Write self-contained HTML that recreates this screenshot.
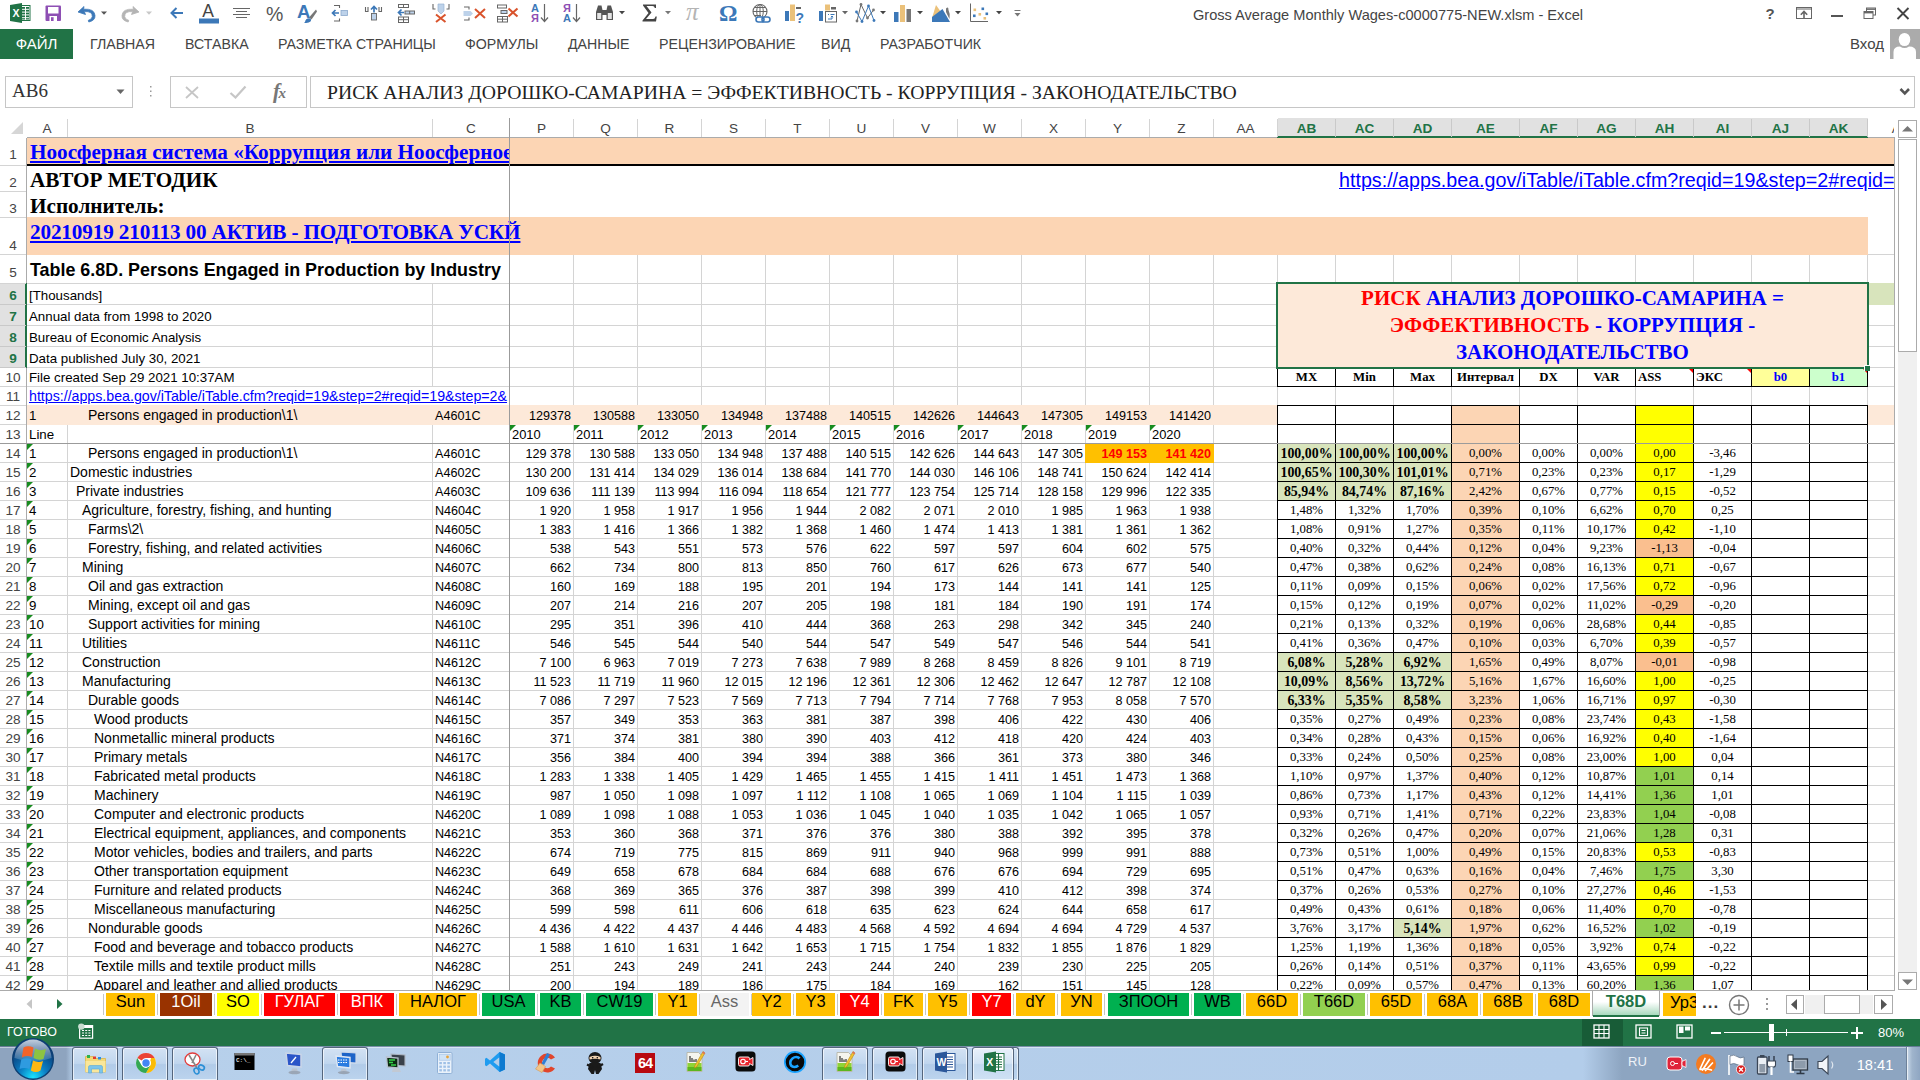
<!DOCTYPE html><html><head><meta charset="utf-8"><title>Excel</title><style>
html,body{margin:0;padding:0}
body{width:1920px;height:1080px;overflow:hidden;position:relative;background:#fff;font-family:'Liberation Sans',sans-serif;color:#000}
div,span.a,svg.a{position:absolute;box-sizing:border-box}
.t{white-space:pre;overflow:visible}
.c{font-size:13.3px;line-height:19px;white-space:pre}
.b{font-size:14px;line-height:19px;white-space:pre}
.k{font-size:12.6px;line-height:20px;white-space:pre}
.n{font-size:12.6px;line-height:21px;white-space:pre;text-align:right}
.s{font-family:'Liberation Serif',serif;font-size:12.8px;line-height:19px;text-align:center;white-space:pre}
.sb{font-family:'Liberation Serif',serif;font-size:13.9px;line-height:19px;text-align:center;font-weight:bold;white-space:pre}
.rh{font-size:13.6px;color:#444;text-align:center;width:26px;left:0}
.ch{font-size:13.6px;color:#444;text-align:center;top:118px;height:19px;line-height:21px}
.tab{top:993px;height:23px;font-size:16.5px;line-height:17px;text-align:center;white-space:pre;overflow:hidden}
.gt{width:0;height:0;border-top:6px solid #178c1f;border-right:6px solid transparent}
.rt{width:0;height:0;border-top:5px solid #f00;border-left:5px solid transparent}
.rb{top:29px;height:29px;line-height:30px;font-size:14.2px;color:#444;white-space:pre}
a{color:#00f}
</style></head><body>
<div id="g" style="left:0;top:0;width:1895px;height:991px;overflow:hidden">
<div style="left:27px;top:165px;width:1867px;height:1px;background:#d4d4d4"></div>
<div style="left:27px;top:191px;width:1867px;height:1px;background:#d4d4d4"></div>
<div style="left:27px;top:217px;width:1867px;height:1px;background:#d4d4d4"></div>
<div style="left:27px;top:254px;width:1867px;height:1px;background:#d4d4d4"></div>
<div style="left:27px;top:283px;width:1867px;height:1px;background:#d4d4d4"></div>
<div style="left:27px;top:304px;width:1867px;height:1px;background:#d4d4d4"></div>
<div style="left:27px;top:325px;width:1867px;height:1px;background:#d4d4d4"></div>
<div style="left:27px;top:346px;width:1867px;height:1px;background:#d4d4d4"></div>
<div style="left:27px;top:367px;width:1867px;height:1px;background:#d4d4d4"></div>
<div style="left:27px;top:386px;width:1867px;height:1px;background:#d4d4d4"></div>
<div style="left:27px;top:405px;width:1867px;height:1px;background:#d4d4d4"></div>
<div style="left:27px;top:424px;width:1867px;height:1px;background:#d4d4d4"></div>
<div style="left:27px;top:443px;width:1867px;height:1px;background:#d4d4d4"></div>
<div style="left:27px;top:462px;width:1867px;height:1px;background:#d4d4d4"></div>
<div style="left:27px;top:481px;width:1867px;height:1px;background:#d4d4d4"></div>
<div style="left:27px;top:500px;width:1867px;height:1px;background:#d4d4d4"></div>
<div style="left:27px;top:519px;width:1867px;height:1px;background:#d4d4d4"></div>
<div style="left:27px;top:538px;width:1867px;height:1px;background:#d4d4d4"></div>
<div style="left:27px;top:557px;width:1867px;height:1px;background:#d4d4d4"></div>
<div style="left:27px;top:576px;width:1867px;height:1px;background:#d4d4d4"></div>
<div style="left:27px;top:595px;width:1867px;height:1px;background:#d4d4d4"></div>
<div style="left:27px;top:614px;width:1867px;height:1px;background:#d4d4d4"></div>
<div style="left:27px;top:633px;width:1867px;height:1px;background:#d4d4d4"></div>
<div style="left:27px;top:652px;width:1867px;height:1px;background:#d4d4d4"></div>
<div style="left:27px;top:671px;width:1867px;height:1px;background:#d4d4d4"></div>
<div style="left:27px;top:690px;width:1867px;height:1px;background:#d4d4d4"></div>
<div style="left:27px;top:709px;width:1867px;height:1px;background:#d4d4d4"></div>
<div style="left:27px;top:728px;width:1867px;height:1px;background:#d4d4d4"></div>
<div style="left:27px;top:747px;width:1867px;height:1px;background:#d4d4d4"></div>
<div style="left:27px;top:766px;width:1867px;height:1px;background:#d4d4d4"></div>
<div style="left:27px;top:785px;width:1867px;height:1px;background:#d4d4d4"></div>
<div style="left:27px;top:804px;width:1867px;height:1px;background:#d4d4d4"></div>
<div style="left:27px;top:823px;width:1867px;height:1px;background:#d4d4d4"></div>
<div style="left:27px;top:842px;width:1867px;height:1px;background:#d4d4d4"></div>
<div style="left:27px;top:861px;width:1867px;height:1px;background:#d4d4d4"></div>
<div style="left:27px;top:880px;width:1867px;height:1px;background:#d4d4d4"></div>
<div style="left:27px;top:899px;width:1867px;height:1px;background:#d4d4d4"></div>
<div style="left:27px;top:918px;width:1867px;height:1px;background:#d4d4d4"></div>
<div style="left:27px;top:937px;width:1867px;height:1px;background:#d4d4d4"></div>
<div style="left:27px;top:956px;width:1867px;height:1px;background:#d4d4d4"></div>
<div style="left:27px;top:975px;width:1867px;height:1px;background:#d4d4d4"></div>
<div style="left:67px;top:138px;width:1px;height:852px;background:#d4d4d4"></div>
<div style="left:432px;top:138px;width:1px;height:852px;background:#d4d4d4"></div>
<div style="left:509px;top:138px;width:1px;height:852px;background:#d4d4d4"></div>
<div style="left:573px;top:138px;width:1px;height:852px;background:#d4d4d4"></div>
<div style="left:637px;top:138px;width:1px;height:852px;background:#d4d4d4"></div>
<div style="left:701px;top:138px;width:1px;height:852px;background:#d4d4d4"></div>
<div style="left:765px;top:138px;width:1px;height:852px;background:#d4d4d4"></div>
<div style="left:829px;top:138px;width:1px;height:852px;background:#d4d4d4"></div>
<div style="left:893px;top:138px;width:1px;height:852px;background:#d4d4d4"></div>
<div style="left:957px;top:138px;width:1px;height:852px;background:#d4d4d4"></div>
<div style="left:1021px;top:138px;width:1px;height:852px;background:#d4d4d4"></div>
<div style="left:1085px;top:138px;width:1px;height:852px;background:#d4d4d4"></div>
<div style="left:1149px;top:138px;width:1px;height:852px;background:#d4d4d4"></div>
<div style="left:1213px;top:138px;width:1px;height:852px;background:#d4d4d4"></div>
<div style="left:1277px;top:138px;width:1px;height:852px;background:#d4d4d4"></div>
<div style="left:1335px;top:138px;width:1px;height:852px;background:#d4d4d4"></div>
<div style="left:1393px;top:138px;width:1px;height:852px;background:#d4d4d4"></div>
<div style="left:1451px;top:138px;width:1px;height:852px;background:#d4d4d4"></div>
<div style="left:1519px;top:138px;width:1px;height:852px;background:#d4d4d4"></div>
<div style="left:1577px;top:138px;width:1px;height:852px;background:#d4d4d4"></div>
<div style="left:1635px;top:138px;width:1px;height:852px;background:#d4d4d4"></div>
<div style="left:1693px;top:138px;width:1px;height:852px;background:#d4d4d4"></div>
<div style="left:1751px;top:138px;width:1px;height:852px;background:#d4d4d4"></div>
<div style="left:1809px;top:138px;width:1px;height:852px;background:#d4d4d4"></div>
<div style="left:1867px;top:138px;width:1px;height:852px;background:#d4d4d4"></div>
<div style="left:27px;top:138px;width:1867px;height:28px;background:#fcd5b4;"></div>
<div style="left:27px;top:165px;width:1867px;height:53px;background:#fff;"></div>
<div style="left:27px;top:164px;width:1867px;height:2px;background:#000"></div>
<div style="left:27px;top:217px;width:1841px;height:38px;background:#fcd5b4;"></div>
<div style="left:27px;top:255px;width:482px;height:28px;background:#fff"></div>
<div style="left:67px;top:284px;width:1px;height:20px;background:#fff"></div>
<div style="left:67px;top:305px;width:1px;height:20px;background:#fff"></div>
<div style="left:67px;top:326px;width:1px;height:20px;background:#fff"></div>
<div style="left:67px;top:347px;width:1px;height:20px;background:#fff"></div>
<div style="left:67px;top:368px;width:1px;height:18px;background:#fff"></div>
<div style="left:67px;top:387px;width:1px;height:18px;background:#fff"></div>
<div style="left:432px;top:387px;width:1px;height:18px;background:#fff"></div>
<div style="left:27px;top:405px;width:1867px;height:20px;background:#fde9d9;"></div>
<div style="left:1868px;top:283px;width:26px;height:22px;background:#d8e4bc"></div>
<div style="left:27px;top:138px;width:482px;height:26px;overflow:hidden"><a class="a" style="left:3px;top:0;font-family:'Liberation Serif',serif;font-weight:bold;white-space:pre;font-size:21.2px;line-height:29px;color:#00f;text-decoration:underline;position:absolute">Ноосферная система «Коррупция или Ноосферное</a></div>
<div class="t" style="left:30px;top:166px;width:400px;height:26px;font-family:'Liberation Serif',serif;font-weight:bold;white-space:pre;font-size:21.2px;line-height:29px">АВТОР МЕТОДИК</div>
<div class="t" style="left:30px;top:192px;width:400px;height:26px;font-family:'Liberation Serif',serif;font-weight:bold;white-space:pre;font-size:21.2px;line-height:29px">Исполнитель:</div>
<div style="left:27px;top:218px;width:494px;height:37px;overflow:hidden"><a style="left:3px;top:0;font-family:'Liberation Serif',serif;font-weight:bold;white-space:pre;font-size:21.2px;letter-spacing:-.14px;line-height:29px;color:#00f;text-decoration:underline;position:absolute">20210919 210113 00 АКТИВ - ПОДГОТОВКА УСКЙ</a></div>
<div class="t" style="left:30px;top:255px;width:480px;height:28px;font-weight:bold;font-size:17.9px;line-height:31px">Table 6.8D. Persons Engaged in Production by Industry</div>
<div style="left:1300px;top:166px;width:594px;height:26px;overflow:hidden"><a style="left:39px;top:0;position:absolute;white-space:pre;font-size:19.7px;line-height:28px;color:#00f;text-decoration:underline">https://apps.bea.gov/iTable/iTable.cfm?reqid=19&amp;step=2#reqid=</a></div>
<div class="c" style="left:29px;top:284px;width:400px;height:21px;line-height:24px">[Thousands]</div>
<div class="c" style="left:29px;top:305px;width:400px;height:21px;line-height:24px">Annual data from 1998 to 2020</div>
<div class="c" style="left:29px;top:326px;width:400px;height:21px;line-height:24px">Bureau of Economic Analysis</div>
<div class="c" style="left:29px;top:347px;width:400px;height:21px;line-height:24px">Data published July 30, 2021</div>
<div class="c" style="left:29px;top:368px;width:400px;height:19px;line-height:20px">File created Sep 29 2021 10:37AM</div>
<div style="left:27px;top:387px;width:482px;height:19px;overflow:hidden"><a class="c" style="left:2px;top:0;position:absolute;color:#00f;text-decoration:underline;font-size:14.2px">https://apps.bea.gov/iTable/iTable.cfm?reqid=19&amp;step=2#reqid=19&amp;step=2&amp;</a></div>
<div class="c" style="left:29px;top:406px;width:36px;height:19px;">1</div>
<div class="b" style="left:88px;top:406px;width:300px;height:19px;">Persons engaged in production\1\</div>
<div class="k" style="left:435px;top:406px;width:72px;height:19px;">A4601C</div>
<div class="n" style="left:512px;top:406px;width:59px;height:19px;">129378</div>
<div class="n" style="left:576px;top:406px;width:59px;height:19px;">130588</div>
<div class="n" style="left:640px;top:406px;width:59px;height:19px;">133050</div>
<div class="n" style="left:704px;top:406px;width:59px;height:19px;">134948</div>
<div class="n" style="left:768px;top:406px;width:59px;height:19px;">137488</div>
<div class="n" style="left:832px;top:406px;width:59px;height:19px;">140515</div>
<div class="n" style="left:896px;top:406px;width:59px;height:19px;">142626</div>
<div class="n" style="left:960px;top:406px;width:59px;height:19px;">144643</div>
<div class="n" style="left:1024px;top:406px;width:59px;height:19px;">147305</div>
<div class="n" style="left:1088px;top:406px;width:59px;height:19px;">149153</div>
<div class="n" style="left:1152px;top:406px;width:59px;height:19px;">141420</div>
<div class="c" style="left:29px;top:425px;width:36px;height:19px;">Line</div>
<div class="c" style="left:512px;top:425px;width:59px;height:19px;font-size:12.9px">2010</div>
<div class="gt" style="left:510px;top:425px;width:0px;height:0px;"></div>
<div class="c" style="left:576px;top:425px;width:59px;height:19px;font-size:12.9px">2011</div>
<div class="gt" style="left:574px;top:425px;width:0px;height:0px;"></div>
<div class="c" style="left:640px;top:425px;width:59px;height:19px;font-size:12.9px">2012</div>
<div class="gt" style="left:638px;top:425px;width:0px;height:0px;"></div>
<div class="c" style="left:704px;top:425px;width:59px;height:19px;font-size:12.9px">2013</div>
<div class="gt" style="left:702px;top:425px;width:0px;height:0px;"></div>
<div class="c" style="left:768px;top:425px;width:59px;height:19px;font-size:12.9px">2014</div>
<div class="gt" style="left:766px;top:425px;width:0px;height:0px;"></div>
<div class="c" style="left:832px;top:425px;width:59px;height:19px;font-size:12.9px">2015</div>
<div class="gt" style="left:830px;top:425px;width:0px;height:0px;"></div>
<div class="c" style="left:896px;top:425px;width:59px;height:19px;font-size:12.9px">2016</div>
<div class="gt" style="left:894px;top:425px;width:0px;height:0px;"></div>
<div class="c" style="left:960px;top:425px;width:59px;height:19px;font-size:12.9px">2017</div>
<div class="gt" style="left:958px;top:425px;width:0px;height:0px;"></div>
<div class="c" style="left:1024px;top:425px;width:59px;height:19px;font-size:12.9px">2018</div>
<div class="gt" style="left:1022px;top:425px;width:0px;height:0px;"></div>
<div class="c" style="left:1088px;top:425px;width:59px;height:19px;font-size:12.9px">2019</div>
<div class="gt" style="left:1086px;top:425px;width:0px;height:0px;"></div>
<div class="c" style="left:1152px;top:425px;width:59px;height:19px;font-size:12.9px">2020</div>
<div class="gt" style="left:1150px;top:425px;width:0px;height:0px;"></div>
<div style="left:1085px;top:443px;width:129px;height:20px;background:#ffc000;"></div>
<div class="c" style="left:29px;top:444px;width:36px;height:19px;">1</div>
<div class="gt" style="left:27px;top:444px;width:0px;height:0px;"></div>
<div class="b" style="left:88px;top:444px;width:360px;height:19px;">Persons engaged in production\1\</div>
<div class="k" style="left:435px;top:444px;width:72px;height:19px;">A4601C</div>
<div class="n" style="left:512px;top:444px;width:59px;height:19px;">129 378</div>
<div class="n" style="left:576px;top:444px;width:59px;height:19px;">130 588</div>
<div class="n" style="left:640px;top:444px;width:59px;height:19px;">133 050</div>
<div class="n" style="left:704px;top:444px;width:59px;height:19px;">134 948</div>
<div class="n" style="left:768px;top:444px;width:59px;height:19px;">137 488</div>
<div class="n" style="left:832px;top:444px;width:59px;height:19px;">140 515</div>
<div class="n" style="left:896px;top:444px;width:59px;height:19px;">142 626</div>
<div class="n" style="left:960px;top:444px;width:59px;height:19px;">144 643</div>
<div class="n" style="left:1024px;top:444px;width:59px;height:19px;">147 305</div>
<div class="n" style="left:1088px;top:444px;width:59px;height:19px;color:#f00;font-weight:bold">149 153</div>
<div class="n" style="left:1152px;top:444px;width:59px;height:19px;color:#f00;font-weight:bold">141 420</div>
<div class="c" style="left:29px;top:463px;width:36px;height:19px;">2</div>
<div class="gt" style="left:27px;top:463px;width:0px;height:0px;"></div>
<div class="b" style="left:70px;top:463px;width:360px;height:19px;">Domestic industries</div>
<div class="k" style="left:435px;top:463px;width:72px;height:19px;">A4602C</div>
<div class="n" style="left:512px;top:463px;width:59px;height:19px;">130 200</div>
<div class="n" style="left:576px;top:463px;width:59px;height:19px;">131 414</div>
<div class="n" style="left:640px;top:463px;width:59px;height:19px;">134 029</div>
<div class="n" style="left:704px;top:463px;width:59px;height:19px;">136 014</div>
<div class="n" style="left:768px;top:463px;width:59px;height:19px;">138 684</div>
<div class="n" style="left:832px;top:463px;width:59px;height:19px;">141 770</div>
<div class="n" style="left:896px;top:463px;width:59px;height:19px;">144 030</div>
<div class="n" style="left:960px;top:463px;width:59px;height:19px;">146 106</div>
<div class="n" style="left:1024px;top:463px;width:59px;height:19px;">148 741</div>
<div class="n" style="left:1088px;top:463px;width:59px;height:19px;">150 624</div>
<div class="n" style="left:1152px;top:463px;width:59px;height:19px;">142 414</div>
<div class="c" style="left:29px;top:482px;width:36px;height:19px;">3</div>
<div class="gt" style="left:27px;top:482px;width:0px;height:0px;"></div>
<div class="b" style="left:76px;top:482px;width:360px;height:19px;">Private industries</div>
<div class="k" style="left:435px;top:482px;width:72px;height:19px;">A4603C</div>
<div class="n" style="left:512px;top:482px;width:59px;height:19px;">109 636</div>
<div class="n" style="left:576px;top:482px;width:59px;height:19px;">111 139</div>
<div class="n" style="left:640px;top:482px;width:59px;height:19px;">113 994</div>
<div class="n" style="left:704px;top:482px;width:59px;height:19px;">116 094</div>
<div class="n" style="left:768px;top:482px;width:59px;height:19px;">118 654</div>
<div class="n" style="left:832px;top:482px;width:59px;height:19px;">121 777</div>
<div class="n" style="left:896px;top:482px;width:59px;height:19px;">123 754</div>
<div class="n" style="left:960px;top:482px;width:59px;height:19px;">125 714</div>
<div class="n" style="left:1024px;top:482px;width:59px;height:19px;">128 158</div>
<div class="n" style="left:1088px;top:482px;width:59px;height:19px;">129 996</div>
<div class="n" style="left:1152px;top:482px;width:59px;height:19px;">122 335</div>
<div class="c" style="left:29px;top:501px;width:36px;height:19px;">4</div>
<div class="gt" style="left:27px;top:501px;width:0px;height:0px;"></div>
<div class="b" style="left:82px;top:501px;width:360px;height:19px;">Agriculture, forestry, fishing, and hunting</div>
<div class="k" style="left:435px;top:501px;width:72px;height:19px;">N4604C</div>
<div class="n" style="left:512px;top:501px;width:59px;height:19px;">1 920</div>
<div class="n" style="left:576px;top:501px;width:59px;height:19px;">1 958</div>
<div class="n" style="left:640px;top:501px;width:59px;height:19px;">1 917</div>
<div class="n" style="left:704px;top:501px;width:59px;height:19px;">1 956</div>
<div class="n" style="left:768px;top:501px;width:59px;height:19px;">1 944</div>
<div class="n" style="left:832px;top:501px;width:59px;height:19px;">2 082</div>
<div class="n" style="left:896px;top:501px;width:59px;height:19px;">2 071</div>
<div class="n" style="left:960px;top:501px;width:59px;height:19px;">2 010</div>
<div class="n" style="left:1024px;top:501px;width:59px;height:19px;">1 985</div>
<div class="n" style="left:1088px;top:501px;width:59px;height:19px;">1 963</div>
<div class="n" style="left:1152px;top:501px;width:59px;height:19px;">1 938</div>
<div class="c" style="left:29px;top:520px;width:36px;height:19px;">5</div>
<div class="gt" style="left:27px;top:520px;width:0px;height:0px;"></div>
<div class="b" style="left:88px;top:520px;width:360px;height:19px;">Farms\2\</div>
<div class="k" style="left:435px;top:520px;width:72px;height:19px;">N4605C</div>
<div class="n" style="left:512px;top:520px;width:59px;height:19px;">1 383</div>
<div class="n" style="left:576px;top:520px;width:59px;height:19px;">1 416</div>
<div class="n" style="left:640px;top:520px;width:59px;height:19px;">1 366</div>
<div class="n" style="left:704px;top:520px;width:59px;height:19px;">1 382</div>
<div class="n" style="left:768px;top:520px;width:59px;height:19px;">1 368</div>
<div class="n" style="left:832px;top:520px;width:59px;height:19px;">1 460</div>
<div class="n" style="left:896px;top:520px;width:59px;height:19px;">1 474</div>
<div class="n" style="left:960px;top:520px;width:59px;height:19px;">1 413</div>
<div class="n" style="left:1024px;top:520px;width:59px;height:19px;">1 381</div>
<div class="n" style="left:1088px;top:520px;width:59px;height:19px;">1 361</div>
<div class="n" style="left:1152px;top:520px;width:59px;height:19px;">1 362</div>
<div class="c" style="left:29px;top:539px;width:36px;height:19px;">6</div>
<div class="gt" style="left:27px;top:539px;width:0px;height:0px;"></div>
<div class="b" style="left:88px;top:539px;width:360px;height:19px;">Forestry, fishing, and related activities</div>
<div class="k" style="left:435px;top:539px;width:72px;height:19px;">N4606C</div>
<div class="n" style="left:512px;top:539px;width:59px;height:19px;">538</div>
<div class="n" style="left:576px;top:539px;width:59px;height:19px;">543</div>
<div class="n" style="left:640px;top:539px;width:59px;height:19px;">551</div>
<div class="n" style="left:704px;top:539px;width:59px;height:19px;">573</div>
<div class="n" style="left:768px;top:539px;width:59px;height:19px;">576</div>
<div class="n" style="left:832px;top:539px;width:59px;height:19px;">622</div>
<div class="n" style="left:896px;top:539px;width:59px;height:19px;">597</div>
<div class="n" style="left:960px;top:539px;width:59px;height:19px;">597</div>
<div class="n" style="left:1024px;top:539px;width:59px;height:19px;">604</div>
<div class="n" style="left:1088px;top:539px;width:59px;height:19px;">602</div>
<div class="n" style="left:1152px;top:539px;width:59px;height:19px;">575</div>
<div class="c" style="left:29px;top:558px;width:36px;height:19px;">7</div>
<div class="gt" style="left:27px;top:558px;width:0px;height:0px;"></div>
<div class="b" style="left:82px;top:558px;width:360px;height:19px;">Mining</div>
<div class="k" style="left:435px;top:558px;width:72px;height:19px;">N4607C</div>
<div class="n" style="left:512px;top:558px;width:59px;height:19px;">662</div>
<div class="n" style="left:576px;top:558px;width:59px;height:19px;">734</div>
<div class="n" style="left:640px;top:558px;width:59px;height:19px;">800</div>
<div class="n" style="left:704px;top:558px;width:59px;height:19px;">813</div>
<div class="n" style="left:768px;top:558px;width:59px;height:19px;">850</div>
<div class="n" style="left:832px;top:558px;width:59px;height:19px;">760</div>
<div class="n" style="left:896px;top:558px;width:59px;height:19px;">617</div>
<div class="n" style="left:960px;top:558px;width:59px;height:19px;">626</div>
<div class="n" style="left:1024px;top:558px;width:59px;height:19px;">673</div>
<div class="n" style="left:1088px;top:558px;width:59px;height:19px;">677</div>
<div class="n" style="left:1152px;top:558px;width:59px;height:19px;">540</div>
<div class="c" style="left:29px;top:577px;width:36px;height:19px;">8</div>
<div class="gt" style="left:27px;top:577px;width:0px;height:0px;"></div>
<div class="b" style="left:88px;top:577px;width:360px;height:19px;">Oil and gas extraction</div>
<div class="k" style="left:435px;top:577px;width:72px;height:19px;">N4608C</div>
<div class="n" style="left:512px;top:577px;width:59px;height:19px;">160</div>
<div class="n" style="left:576px;top:577px;width:59px;height:19px;">169</div>
<div class="n" style="left:640px;top:577px;width:59px;height:19px;">188</div>
<div class="n" style="left:704px;top:577px;width:59px;height:19px;">195</div>
<div class="n" style="left:768px;top:577px;width:59px;height:19px;">201</div>
<div class="n" style="left:832px;top:577px;width:59px;height:19px;">194</div>
<div class="n" style="left:896px;top:577px;width:59px;height:19px;">173</div>
<div class="n" style="left:960px;top:577px;width:59px;height:19px;">144</div>
<div class="n" style="left:1024px;top:577px;width:59px;height:19px;">141</div>
<div class="n" style="left:1088px;top:577px;width:59px;height:19px;">141</div>
<div class="n" style="left:1152px;top:577px;width:59px;height:19px;">125</div>
<div class="c" style="left:29px;top:596px;width:36px;height:19px;">9</div>
<div class="gt" style="left:27px;top:596px;width:0px;height:0px;"></div>
<div class="b" style="left:88px;top:596px;width:360px;height:19px;">Mining, except oil and gas</div>
<div class="k" style="left:435px;top:596px;width:72px;height:19px;">N4609C</div>
<div class="n" style="left:512px;top:596px;width:59px;height:19px;">207</div>
<div class="n" style="left:576px;top:596px;width:59px;height:19px;">214</div>
<div class="n" style="left:640px;top:596px;width:59px;height:19px;">216</div>
<div class="n" style="left:704px;top:596px;width:59px;height:19px;">207</div>
<div class="n" style="left:768px;top:596px;width:59px;height:19px;">205</div>
<div class="n" style="left:832px;top:596px;width:59px;height:19px;">198</div>
<div class="n" style="left:896px;top:596px;width:59px;height:19px;">181</div>
<div class="n" style="left:960px;top:596px;width:59px;height:19px;">184</div>
<div class="n" style="left:1024px;top:596px;width:59px;height:19px;">190</div>
<div class="n" style="left:1088px;top:596px;width:59px;height:19px;">191</div>
<div class="n" style="left:1152px;top:596px;width:59px;height:19px;">174</div>
<div class="c" style="left:29px;top:615px;width:36px;height:19px;">10</div>
<div class="gt" style="left:27px;top:615px;width:0px;height:0px;"></div>
<div class="b" style="left:88px;top:615px;width:360px;height:19px;">Support activities for mining</div>
<div class="k" style="left:435px;top:615px;width:72px;height:19px;">N4610C</div>
<div class="n" style="left:512px;top:615px;width:59px;height:19px;">295</div>
<div class="n" style="left:576px;top:615px;width:59px;height:19px;">351</div>
<div class="n" style="left:640px;top:615px;width:59px;height:19px;">396</div>
<div class="n" style="left:704px;top:615px;width:59px;height:19px;">410</div>
<div class="n" style="left:768px;top:615px;width:59px;height:19px;">444</div>
<div class="n" style="left:832px;top:615px;width:59px;height:19px;">368</div>
<div class="n" style="left:896px;top:615px;width:59px;height:19px;">263</div>
<div class="n" style="left:960px;top:615px;width:59px;height:19px;">298</div>
<div class="n" style="left:1024px;top:615px;width:59px;height:19px;">342</div>
<div class="n" style="left:1088px;top:615px;width:59px;height:19px;">345</div>
<div class="n" style="left:1152px;top:615px;width:59px;height:19px;">240</div>
<div class="c" style="left:29px;top:634px;width:36px;height:19px;">11</div>
<div class="gt" style="left:27px;top:634px;width:0px;height:0px;"></div>
<div class="b" style="left:82px;top:634px;width:360px;height:19px;">Utilities</div>
<div class="k" style="left:435px;top:634px;width:72px;height:19px;">N4611C</div>
<div class="n" style="left:512px;top:634px;width:59px;height:19px;">546</div>
<div class="n" style="left:576px;top:634px;width:59px;height:19px;">545</div>
<div class="n" style="left:640px;top:634px;width:59px;height:19px;">544</div>
<div class="n" style="left:704px;top:634px;width:59px;height:19px;">540</div>
<div class="n" style="left:768px;top:634px;width:59px;height:19px;">544</div>
<div class="n" style="left:832px;top:634px;width:59px;height:19px;">547</div>
<div class="n" style="left:896px;top:634px;width:59px;height:19px;">549</div>
<div class="n" style="left:960px;top:634px;width:59px;height:19px;">547</div>
<div class="n" style="left:1024px;top:634px;width:59px;height:19px;">546</div>
<div class="n" style="left:1088px;top:634px;width:59px;height:19px;">544</div>
<div class="n" style="left:1152px;top:634px;width:59px;height:19px;">541</div>
<div class="c" style="left:29px;top:653px;width:36px;height:19px;">12</div>
<div class="gt" style="left:27px;top:653px;width:0px;height:0px;"></div>
<div class="b" style="left:82px;top:653px;width:360px;height:19px;">Construction</div>
<div class="k" style="left:435px;top:653px;width:72px;height:19px;">N4612C</div>
<div class="n" style="left:512px;top:653px;width:59px;height:19px;">7 100</div>
<div class="n" style="left:576px;top:653px;width:59px;height:19px;">6 963</div>
<div class="n" style="left:640px;top:653px;width:59px;height:19px;">7 019</div>
<div class="n" style="left:704px;top:653px;width:59px;height:19px;">7 273</div>
<div class="n" style="left:768px;top:653px;width:59px;height:19px;">7 638</div>
<div class="n" style="left:832px;top:653px;width:59px;height:19px;">7 989</div>
<div class="n" style="left:896px;top:653px;width:59px;height:19px;">8 268</div>
<div class="n" style="left:960px;top:653px;width:59px;height:19px;">8 459</div>
<div class="n" style="left:1024px;top:653px;width:59px;height:19px;">8 826</div>
<div class="n" style="left:1088px;top:653px;width:59px;height:19px;">9 101</div>
<div class="n" style="left:1152px;top:653px;width:59px;height:19px;">8 719</div>
<div class="c" style="left:29px;top:672px;width:36px;height:19px;">13</div>
<div class="gt" style="left:27px;top:672px;width:0px;height:0px;"></div>
<div class="b" style="left:82px;top:672px;width:360px;height:19px;">Manufacturing</div>
<div class="k" style="left:435px;top:672px;width:72px;height:19px;">N4613C</div>
<div class="n" style="left:512px;top:672px;width:59px;height:19px;">11 523</div>
<div class="n" style="left:576px;top:672px;width:59px;height:19px;">11 719</div>
<div class="n" style="left:640px;top:672px;width:59px;height:19px;">11 960</div>
<div class="n" style="left:704px;top:672px;width:59px;height:19px;">12 015</div>
<div class="n" style="left:768px;top:672px;width:59px;height:19px;">12 196</div>
<div class="n" style="left:832px;top:672px;width:59px;height:19px;">12 361</div>
<div class="n" style="left:896px;top:672px;width:59px;height:19px;">12 306</div>
<div class="n" style="left:960px;top:672px;width:59px;height:19px;">12 462</div>
<div class="n" style="left:1024px;top:672px;width:59px;height:19px;">12 647</div>
<div class="n" style="left:1088px;top:672px;width:59px;height:19px;">12 787</div>
<div class="n" style="left:1152px;top:672px;width:59px;height:19px;">12 108</div>
<div class="c" style="left:29px;top:691px;width:36px;height:19px;">14</div>
<div class="gt" style="left:27px;top:691px;width:0px;height:0px;"></div>
<div class="b" style="left:88px;top:691px;width:360px;height:19px;">Durable goods</div>
<div class="k" style="left:435px;top:691px;width:72px;height:19px;">N4614C</div>
<div class="n" style="left:512px;top:691px;width:59px;height:19px;">7 086</div>
<div class="n" style="left:576px;top:691px;width:59px;height:19px;">7 297</div>
<div class="n" style="left:640px;top:691px;width:59px;height:19px;">7 523</div>
<div class="n" style="left:704px;top:691px;width:59px;height:19px;">7 569</div>
<div class="n" style="left:768px;top:691px;width:59px;height:19px;">7 713</div>
<div class="n" style="left:832px;top:691px;width:59px;height:19px;">7 794</div>
<div class="n" style="left:896px;top:691px;width:59px;height:19px;">7 714</div>
<div class="n" style="left:960px;top:691px;width:59px;height:19px;">7 768</div>
<div class="n" style="left:1024px;top:691px;width:59px;height:19px;">7 953</div>
<div class="n" style="left:1088px;top:691px;width:59px;height:19px;">8 058</div>
<div class="n" style="left:1152px;top:691px;width:59px;height:19px;">7 570</div>
<div class="c" style="left:29px;top:710px;width:36px;height:19px;">15</div>
<div class="gt" style="left:27px;top:710px;width:0px;height:0px;"></div>
<div class="b" style="left:94px;top:710px;width:360px;height:19px;">Wood products</div>
<div class="k" style="left:435px;top:710px;width:72px;height:19px;">N4615C</div>
<div class="n" style="left:512px;top:710px;width:59px;height:19px;">357</div>
<div class="n" style="left:576px;top:710px;width:59px;height:19px;">349</div>
<div class="n" style="left:640px;top:710px;width:59px;height:19px;">353</div>
<div class="n" style="left:704px;top:710px;width:59px;height:19px;">363</div>
<div class="n" style="left:768px;top:710px;width:59px;height:19px;">381</div>
<div class="n" style="left:832px;top:710px;width:59px;height:19px;">387</div>
<div class="n" style="left:896px;top:710px;width:59px;height:19px;">398</div>
<div class="n" style="left:960px;top:710px;width:59px;height:19px;">406</div>
<div class="n" style="left:1024px;top:710px;width:59px;height:19px;">422</div>
<div class="n" style="left:1088px;top:710px;width:59px;height:19px;">430</div>
<div class="n" style="left:1152px;top:710px;width:59px;height:19px;">406</div>
<div class="c" style="left:29px;top:729px;width:36px;height:19px;">16</div>
<div class="gt" style="left:27px;top:729px;width:0px;height:0px;"></div>
<div class="b" style="left:94px;top:729px;width:360px;height:19px;">Nonmetallic mineral products</div>
<div class="k" style="left:435px;top:729px;width:72px;height:19px;">N4616C</div>
<div class="n" style="left:512px;top:729px;width:59px;height:19px;">371</div>
<div class="n" style="left:576px;top:729px;width:59px;height:19px;">374</div>
<div class="n" style="left:640px;top:729px;width:59px;height:19px;">381</div>
<div class="n" style="left:704px;top:729px;width:59px;height:19px;">380</div>
<div class="n" style="left:768px;top:729px;width:59px;height:19px;">390</div>
<div class="n" style="left:832px;top:729px;width:59px;height:19px;">403</div>
<div class="n" style="left:896px;top:729px;width:59px;height:19px;">412</div>
<div class="n" style="left:960px;top:729px;width:59px;height:19px;">418</div>
<div class="n" style="left:1024px;top:729px;width:59px;height:19px;">420</div>
<div class="n" style="left:1088px;top:729px;width:59px;height:19px;">424</div>
<div class="n" style="left:1152px;top:729px;width:59px;height:19px;">403</div>
<div class="c" style="left:29px;top:748px;width:36px;height:19px;">17</div>
<div class="gt" style="left:27px;top:748px;width:0px;height:0px;"></div>
<div class="b" style="left:94px;top:748px;width:360px;height:19px;">Primary metals</div>
<div class="k" style="left:435px;top:748px;width:72px;height:19px;">N4617C</div>
<div class="n" style="left:512px;top:748px;width:59px;height:19px;">356</div>
<div class="n" style="left:576px;top:748px;width:59px;height:19px;">384</div>
<div class="n" style="left:640px;top:748px;width:59px;height:19px;">400</div>
<div class="n" style="left:704px;top:748px;width:59px;height:19px;">394</div>
<div class="n" style="left:768px;top:748px;width:59px;height:19px;">394</div>
<div class="n" style="left:832px;top:748px;width:59px;height:19px;">388</div>
<div class="n" style="left:896px;top:748px;width:59px;height:19px;">366</div>
<div class="n" style="left:960px;top:748px;width:59px;height:19px;">361</div>
<div class="n" style="left:1024px;top:748px;width:59px;height:19px;">373</div>
<div class="n" style="left:1088px;top:748px;width:59px;height:19px;">380</div>
<div class="n" style="left:1152px;top:748px;width:59px;height:19px;">346</div>
<div class="c" style="left:29px;top:767px;width:36px;height:19px;">18</div>
<div class="gt" style="left:27px;top:767px;width:0px;height:0px;"></div>
<div class="b" style="left:94px;top:767px;width:360px;height:19px;">Fabricated metal products</div>
<div class="k" style="left:435px;top:767px;width:72px;height:19px;">N4618C</div>
<div class="n" style="left:512px;top:767px;width:59px;height:19px;">1 283</div>
<div class="n" style="left:576px;top:767px;width:59px;height:19px;">1 338</div>
<div class="n" style="left:640px;top:767px;width:59px;height:19px;">1 405</div>
<div class="n" style="left:704px;top:767px;width:59px;height:19px;">1 429</div>
<div class="n" style="left:768px;top:767px;width:59px;height:19px;">1 465</div>
<div class="n" style="left:832px;top:767px;width:59px;height:19px;">1 455</div>
<div class="n" style="left:896px;top:767px;width:59px;height:19px;">1 415</div>
<div class="n" style="left:960px;top:767px;width:59px;height:19px;">1 411</div>
<div class="n" style="left:1024px;top:767px;width:59px;height:19px;">1 451</div>
<div class="n" style="left:1088px;top:767px;width:59px;height:19px;">1 473</div>
<div class="n" style="left:1152px;top:767px;width:59px;height:19px;">1 368</div>
<div class="c" style="left:29px;top:786px;width:36px;height:19px;">19</div>
<div class="gt" style="left:27px;top:786px;width:0px;height:0px;"></div>
<div class="b" style="left:94px;top:786px;width:360px;height:19px;">Machinery</div>
<div class="k" style="left:435px;top:786px;width:72px;height:19px;">N4619C</div>
<div class="n" style="left:512px;top:786px;width:59px;height:19px;">987</div>
<div class="n" style="left:576px;top:786px;width:59px;height:19px;">1 050</div>
<div class="n" style="left:640px;top:786px;width:59px;height:19px;">1 098</div>
<div class="n" style="left:704px;top:786px;width:59px;height:19px;">1 097</div>
<div class="n" style="left:768px;top:786px;width:59px;height:19px;">1 112</div>
<div class="n" style="left:832px;top:786px;width:59px;height:19px;">1 108</div>
<div class="n" style="left:896px;top:786px;width:59px;height:19px;">1 065</div>
<div class="n" style="left:960px;top:786px;width:59px;height:19px;">1 069</div>
<div class="n" style="left:1024px;top:786px;width:59px;height:19px;">1 104</div>
<div class="n" style="left:1088px;top:786px;width:59px;height:19px;">1 115</div>
<div class="n" style="left:1152px;top:786px;width:59px;height:19px;">1 039</div>
<div class="c" style="left:29px;top:805px;width:36px;height:19px;">20</div>
<div class="gt" style="left:27px;top:805px;width:0px;height:0px;"></div>
<div class="b" style="left:94px;top:805px;width:360px;height:19px;">Computer and electronic products</div>
<div class="k" style="left:435px;top:805px;width:72px;height:19px;">N4620C</div>
<div class="n" style="left:512px;top:805px;width:59px;height:19px;">1 089</div>
<div class="n" style="left:576px;top:805px;width:59px;height:19px;">1 098</div>
<div class="n" style="left:640px;top:805px;width:59px;height:19px;">1 088</div>
<div class="n" style="left:704px;top:805px;width:59px;height:19px;">1 053</div>
<div class="n" style="left:768px;top:805px;width:59px;height:19px;">1 036</div>
<div class="n" style="left:832px;top:805px;width:59px;height:19px;">1 045</div>
<div class="n" style="left:896px;top:805px;width:59px;height:19px;">1 040</div>
<div class="n" style="left:960px;top:805px;width:59px;height:19px;">1 035</div>
<div class="n" style="left:1024px;top:805px;width:59px;height:19px;">1 042</div>
<div class="n" style="left:1088px;top:805px;width:59px;height:19px;">1 065</div>
<div class="n" style="left:1152px;top:805px;width:59px;height:19px;">1 057</div>
<div class="c" style="left:29px;top:824px;width:36px;height:19px;">21</div>
<div class="gt" style="left:27px;top:824px;width:0px;height:0px;"></div>
<div class="b" style="left:94px;top:824px;width:360px;height:19px;">Electrical equipment, appliances, and components</div>
<div class="k" style="left:435px;top:824px;width:72px;height:19px;">N4621C</div>
<div class="n" style="left:512px;top:824px;width:59px;height:19px;">353</div>
<div class="n" style="left:576px;top:824px;width:59px;height:19px;">360</div>
<div class="n" style="left:640px;top:824px;width:59px;height:19px;">368</div>
<div class="n" style="left:704px;top:824px;width:59px;height:19px;">371</div>
<div class="n" style="left:768px;top:824px;width:59px;height:19px;">376</div>
<div class="n" style="left:832px;top:824px;width:59px;height:19px;">376</div>
<div class="n" style="left:896px;top:824px;width:59px;height:19px;">380</div>
<div class="n" style="left:960px;top:824px;width:59px;height:19px;">388</div>
<div class="n" style="left:1024px;top:824px;width:59px;height:19px;">392</div>
<div class="n" style="left:1088px;top:824px;width:59px;height:19px;">395</div>
<div class="n" style="left:1152px;top:824px;width:59px;height:19px;">378</div>
<div class="c" style="left:29px;top:843px;width:36px;height:19px;">22</div>
<div class="gt" style="left:27px;top:843px;width:0px;height:0px;"></div>
<div class="b" style="left:94px;top:843px;width:360px;height:19px;">Motor vehicles, bodies and trailers, and parts</div>
<div class="k" style="left:435px;top:843px;width:72px;height:19px;">N4622C</div>
<div class="n" style="left:512px;top:843px;width:59px;height:19px;">674</div>
<div class="n" style="left:576px;top:843px;width:59px;height:19px;">719</div>
<div class="n" style="left:640px;top:843px;width:59px;height:19px;">775</div>
<div class="n" style="left:704px;top:843px;width:59px;height:19px;">815</div>
<div class="n" style="left:768px;top:843px;width:59px;height:19px;">869</div>
<div class="n" style="left:832px;top:843px;width:59px;height:19px;">911</div>
<div class="n" style="left:896px;top:843px;width:59px;height:19px;">940</div>
<div class="n" style="left:960px;top:843px;width:59px;height:19px;">968</div>
<div class="n" style="left:1024px;top:843px;width:59px;height:19px;">999</div>
<div class="n" style="left:1088px;top:843px;width:59px;height:19px;">991</div>
<div class="n" style="left:1152px;top:843px;width:59px;height:19px;">888</div>
<div class="c" style="left:29px;top:862px;width:36px;height:19px;">23</div>
<div class="gt" style="left:27px;top:862px;width:0px;height:0px;"></div>
<div class="b" style="left:94px;top:862px;width:360px;height:19px;">Other transportation equipment</div>
<div class="k" style="left:435px;top:862px;width:72px;height:19px;">N4623C</div>
<div class="n" style="left:512px;top:862px;width:59px;height:19px;">649</div>
<div class="n" style="left:576px;top:862px;width:59px;height:19px;">658</div>
<div class="n" style="left:640px;top:862px;width:59px;height:19px;">678</div>
<div class="n" style="left:704px;top:862px;width:59px;height:19px;">684</div>
<div class="n" style="left:768px;top:862px;width:59px;height:19px;">684</div>
<div class="n" style="left:832px;top:862px;width:59px;height:19px;">688</div>
<div class="n" style="left:896px;top:862px;width:59px;height:19px;">676</div>
<div class="n" style="left:960px;top:862px;width:59px;height:19px;">676</div>
<div class="n" style="left:1024px;top:862px;width:59px;height:19px;">694</div>
<div class="n" style="left:1088px;top:862px;width:59px;height:19px;">729</div>
<div class="n" style="left:1152px;top:862px;width:59px;height:19px;">695</div>
<div class="c" style="left:29px;top:881px;width:36px;height:19px;">24</div>
<div class="gt" style="left:27px;top:881px;width:0px;height:0px;"></div>
<div class="b" style="left:94px;top:881px;width:360px;height:19px;">Furniture and related products</div>
<div class="k" style="left:435px;top:881px;width:72px;height:19px;">N4624C</div>
<div class="n" style="left:512px;top:881px;width:59px;height:19px;">368</div>
<div class="n" style="left:576px;top:881px;width:59px;height:19px;">369</div>
<div class="n" style="left:640px;top:881px;width:59px;height:19px;">365</div>
<div class="n" style="left:704px;top:881px;width:59px;height:19px;">376</div>
<div class="n" style="left:768px;top:881px;width:59px;height:19px;">387</div>
<div class="n" style="left:832px;top:881px;width:59px;height:19px;">398</div>
<div class="n" style="left:896px;top:881px;width:59px;height:19px;">399</div>
<div class="n" style="left:960px;top:881px;width:59px;height:19px;">410</div>
<div class="n" style="left:1024px;top:881px;width:59px;height:19px;">412</div>
<div class="n" style="left:1088px;top:881px;width:59px;height:19px;">398</div>
<div class="n" style="left:1152px;top:881px;width:59px;height:19px;">374</div>
<div class="c" style="left:29px;top:900px;width:36px;height:19px;">25</div>
<div class="gt" style="left:27px;top:900px;width:0px;height:0px;"></div>
<div class="b" style="left:94px;top:900px;width:360px;height:19px;">Miscellaneous manufacturing</div>
<div class="k" style="left:435px;top:900px;width:72px;height:19px;">N4625C</div>
<div class="n" style="left:512px;top:900px;width:59px;height:19px;">599</div>
<div class="n" style="left:576px;top:900px;width:59px;height:19px;">598</div>
<div class="n" style="left:640px;top:900px;width:59px;height:19px;">611</div>
<div class="n" style="left:704px;top:900px;width:59px;height:19px;">606</div>
<div class="n" style="left:768px;top:900px;width:59px;height:19px;">618</div>
<div class="n" style="left:832px;top:900px;width:59px;height:19px;">635</div>
<div class="n" style="left:896px;top:900px;width:59px;height:19px;">623</div>
<div class="n" style="left:960px;top:900px;width:59px;height:19px;">624</div>
<div class="n" style="left:1024px;top:900px;width:59px;height:19px;">644</div>
<div class="n" style="left:1088px;top:900px;width:59px;height:19px;">658</div>
<div class="n" style="left:1152px;top:900px;width:59px;height:19px;">617</div>
<div class="c" style="left:29px;top:919px;width:36px;height:19px;">26</div>
<div class="gt" style="left:27px;top:919px;width:0px;height:0px;"></div>
<div class="b" style="left:88px;top:919px;width:360px;height:19px;">Nondurable goods</div>
<div class="k" style="left:435px;top:919px;width:72px;height:19px;">N4626C</div>
<div class="n" style="left:512px;top:919px;width:59px;height:19px;">4 436</div>
<div class="n" style="left:576px;top:919px;width:59px;height:19px;">4 422</div>
<div class="n" style="left:640px;top:919px;width:59px;height:19px;">4 437</div>
<div class="n" style="left:704px;top:919px;width:59px;height:19px;">4 446</div>
<div class="n" style="left:768px;top:919px;width:59px;height:19px;">4 483</div>
<div class="n" style="left:832px;top:919px;width:59px;height:19px;">4 568</div>
<div class="n" style="left:896px;top:919px;width:59px;height:19px;">4 592</div>
<div class="n" style="left:960px;top:919px;width:59px;height:19px;">4 694</div>
<div class="n" style="left:1024px;top:919px;width:59px;height:19px;">4 694</div>
<div class="n" style="left:1088px;top:919px;width:59px;height:19px;">4 729</div>
<div class="n" style="left:1152px;top:919px;width:59px;height:19px;">4 537</div>
<div class="c" style="left:29px;top:938px;width:36px;height:19px;">27</div>
<div class="gt" style="left:27px;top:938px;width:0px;height:0px;"></div>
<div class="b" style="left:94px;top:938px;width:360px;height:19px;">Food and beverage and tobacco products</div>
<div class="k" style="left:435px;top:938px;width:72px;height:19px;">N4627C</div>
<div class="n" style="left:512px;top:938px;width:59px;height:19px;">1 588</div>
<div class="n" style="left:576px;top:938px;width:59px;height:19px;">1 610</div>
<div class="n" style="left:640px;top:938px;width:59px;height:19px;">1 631</div>
<div class="n" style="left:704px;top:938px;width:59px;height:19px;">1 642</div>
<div class="n" style="left:768px;top:938px;width:59px;height:19px;">1 653</div>
<div class="n" style="left:832px;top:938px;width:59px;height:19px;">1 715</div>
<div class="n" style="left:896px;top:938px;width:59px;height:19px;">1 754</div>
<div class="n" style="left:960px;top:938px;width:59px;height:19px;">1 832</div>
<div class="n" style="left:1024px;top:938px;width:59px;height:19px;">1 855</div>
<div class="n" style="left:1088px;top:938px;width:59px;height:19px;">1 876</div>
<div class="n" style="left:1152px;top:938px;width:59px;height:19px;">1 829</div>
<div class="c" style="left:29px;top:957px;width:36px;height:19px;">28</div>
<div class="gt" style="left:27px;top:957px;width:0px;height:0px;"></div>
<div class="b" style="left:94px;top:957px;width:360px;height:19px;">Textile mills and textile product mills</div>
<div class="k" style="left:435px;top:957px;width:72px;height:19px;">N4628C</div>
<div class="n" style="left:512px;top:957px;width:59px;height:19px;">251</div>
<div class="n" style="left:576px;top:957px;width:59px;height:19px;">243</div>
<div class="n" style="left:640px;top:957px;width:59px;height:19px;">249</div>
<div class="n" style="left:704px;top:957px;width:59px;height:19px;">241</div>
<div class="n" style="left:768px;top:957px;width:59px;height:19px;">243</div>
<div class="n" style="left:832px;top:957px;width:59px;height:19px;">244</div>
<div class="n" style="left:896px;top:957px;width:59px;height:19px;">240</div>
<div class="n" style="left:960px;top:957px;width:59px;height:19px;">239</div>
<div class="n" style="left:1024px;top:957px;width:59px;height:19px;">230</div>
<div class="n" style="left:1088px;top:957px;width:59px;height:19px;">225</div>
<div class="n" style="left:1152px;top:957px;width:59px;height:19px;">205</div>
<div class="c" style="left:29px;top:976px;width:36px;height:19px;">29</div>
<div class="gt" style="left:27px;top:976px;width:0px;height:0px;"></div>
<div class="b" style="left:94px;top:976px;width:360px;height:19px;">Apparel and leather and allied products</div>
<div class="k" style="left:435px;top:976px;width:72px;height:19px;">N4629C</div>
<div class="n" style="left:512px;top:976px;width:59px;height:19px;">200</div>
<div class="n" style="left:576px;top:976px;width:59px;height:19px;">194</div>
<div class="n" style="left:640px;top:976px;width:59px;height:19px;">189</div>
<div class="n" style="left:704px;top:976px;width:59px;height:19px;">186</div>
<div class="n" style="left:768px;top:976px;width:59px;height:19px;">175</div>
<div class="n" style="left:832px;top:976px;width:59px;height:19px;">184</div>
<div class="n" style="left:896px;top:976px;width:59px;height:19px;">169</div>
<div class="n" style="left:960px;top:976px;width:59px;height:19px;">162</div>
<div class="n" style="left:1024px;top:976px;width:59px;height:19px;">151</div>
<div class="n" style="left:1088px;top:976px;width:59px;height:19px;">145</div>
<div class="n" style="left:1152px;top:976px;width:59px;height:19px;">128</div>
<div style="left:1451px;top:405px;width:69px;height:585px;background:#fcd5b4;"></div>
<div style="left:1635px;top:405px;width:59px;height:585px;background:#ffff00;"></div>
<div style="left:1635px;top:785px;width:59px;height:20px;background:#92d050;"></div>
<div style="left:1635px;top:804px;width:59px;height:20px;background:#92d050;"></div>
<div style="left:1635px;top:823px;width:59px;height:20px;background:#92d050;"></div>
<div style="left:1635px;top:861px;width:59px;height:20px;background:#92d050;"></div>
<div style="left:1635px;top:918px;width:59px;height:20px;background:#92d050;"></div>
<div style="left:1635px;top:975px;width:59px;height:15px;background:#92d050;"></div>
<div style="left:1635px;top:766px;width:59px;height:20px;background:#92d050;"></div>
<div style="left:1635px;top:652px;width:59px;height:20px;background:#fabf8f;"></div>
<div style="left:1635px;top:538px;width:59px;height:20px;background:#fabf8f;"></div>
<div style="left:1635px;top:595px;width:59px;height:20px;background:#fabf8f;"></div>
<div style="left:1277px;top:481px;width:175px;height:20px;background:#d8e4bc;"></div>
<div style="left:1277px;top:652px;width:175px;height:20px;background:#d8e4bc;"></div>
<div style="left:1277px;top:671px;width:175px;height:20px;background:#d8e4bc;"></div>
<div style="left:1277px;top:690px;width:175px;height:20px;background:#d8e4bc;"></div>
<div style="left:1277px;top:443px;width:175px;height:20px;background:#d8e4bc;"></div>
<div style="left:1277px;top:462px;width:175px;height:20px;background:#d8e4bc;"></div>
<div style="left:1393px;top:918px;width:59px;height:20px;background:#d8e4bc;"></div>
<div style="left:1277px;top:367px;width:475px;height:20px;background:#fff;"></div>
<div style="left:1751px;top:367px;width:59px;height:20px;background:#ffff99;"></div>
<div style="left:1809px;top:367px;width:59px;height:20px;background:#ccffcc;"></div>
<div style="left:1277px;top:405px;width:175px;height:39px;background:#fff;"></div>
<div style="left:1519px;top:405px;width:117px;height:39px;background:#fff;"></div>
<div style="left:1693px;top:405px;width:175px;height:39px;background:#fff;"></div>
<div style="left:1277px;top:368px;width:1px;height:19px;background:#000"></div>
<div style="left:1277px;top:405px;width:1px;height:585px;background:#000"></div>
<div style="left:1335px;top:368px;width:1px;height:19px;background:#000"></div>
<div style="left:1335px;top:405px;width:1px;height:585px;background:#000"></div>
<div style="left:1393px;top:368px;width:1px;height:19px;background:#000"></div>
<div style="left:1393px;top:405px;width:1px;height:585px;background:#000"></div>
<div style="left:1451px;top:368px;width:1px;height:19px;background:#000"></div>
<div style="left:1451px;top:405px;width:1px;height:585px;background:#000"></div>
<div style="left:1519px;top:368px;width:1px;height:19px;background:#000"></div>
<div style="left:1519px;top:405px;width:1px;height:585px;background:#000"></div>
<div style="left:1577px;top:368px;width:1px;height:19px;background:#000"></div>
<div style="left:1577px;top:405px;width:1px;height:585px;background:#000"></div>
<div style="left:1635px;top:368px;width:1px;height:19px;background:#000"></div>
<div style="left:1635px;top:405px;width:1px;height:585px;background:#000"></div>
<div style="left:1693px;top:368px;width:1px;height:19px;background:#000"></div>
<div style="left:1693px;top:405px;width:1px;height:585px;background:#000"></div>
<div style="left:1751px;top:368px;width:1px;height:19px;background:#000"></div>
<div style="left:1751px;top:405px;width:1px;height:585px;background:#000"></div>
<div style="left:1809px;top:368px;width:1px;height:19px;background:#000"></div>
<div style="left:1809px;top:405px;width:1px;height:585px;background:#000"></div>
<div style="left:1867px;top:368px;width:1px;height:19px;background:#000"></div>
<div style="left:1867px;top:405px;width:1px;height:585px;background:#000"></div>
<div style="left:1277px;top:386px;width:591px;height:1px;background:#000"></div>
<div style="left:1277px;top:405px;width:591px;height:1px;background:#000"></div>
<div style="left:1277px;top:424px;width:591px;height:1px;background:#000"></div>
<div style="left:1277px;top:443px;width:591px;height:1px;background:#000"></div>
<div style="left:1277px;top:462px;width:591px;height:1px;background:#000"></div>
<div style="left:1277px;top:481px;width:591px;height:1px;background:#000"></div>
<div style="left:1277px;top:500px;width:591px;height:1px;background:#000"></div>
<div style="left:1277px;top:519px;width:591px;height:1px;background:#000"></div>
<div style="left:1277px;top:538px;width:591px;height:1px;background:#000"></div>
<div style="left:1277px;top:557px;width:591px;height:1px;background:#000"></div>
<div style="left:1277px;top:576px;width:591px;height:1px;background:#000"></div>
<div style="left:1277px;top:595px;width:591px;height:1px;background:#000"></div>
<div style="left:1277px;top:614px;width:591px;height:1px;background:#000"></div>
<div style="left:1277px;top:633px;width:591px;height:1px;background:#000"></div>
<div style="left:1277px;top:652px;width:591px;height:1px;background:#000"></div>
<div style="left:1277px;top:671px;width:591px;height:1px;background:#000"></div>
<div style="left:1277px;top:690px;width:591px;height:1px;background:#000"></div>
<div style="left:1277px;top:709px;width:591px;height:1px;background:#000"></div>
<div style="left:1277px;top:728px;width:591px;height:1px;background:#000"></div>
<div style="left:1277px;top:747px;width:591px;height:1px;background:#000"></div>
<div style="left:1277px;top:766px;width:591px;height:1px;background:#000"></div>
<div style="left:1277px;top:785px;width:591px;height:1px;background:#000"></div>
<div style="left:1277px;top:804px;width:591px;height:1px;background:#000"></div>
<div style="left:1277px;top:823px;width:591px;height:1px;background:#000"></div>
<div style="left:1277px;top:842px;width:591px;height:1px;background:#000"></div>
<div style="left:1277px;top:861px;width:591px;height:1px;background:#000"></div>
<div style="left:1277px;top:880px;width:591px;height:1px;background:#000"></div>
<div style="left:1277px;top:899px;width:591px;height:1px;background:#000"></div>
<div style="left:1277px;top:918px;width:591px;height:1px;background:#000"></div>
<div style="left:1277px;top:937px;width:591px;height:1px;background:#000"></div>
<div style="left:1277px;top:956px;width:591px;height:1px;background:#000"></div>
<div style="left:1277px;top:975px;width:591px;height:1px;background:#000"></div>
<div class="sb" style="left:1278px;top:368px;width:57px;height:19px;font-size:12.8px">MX</div>
<div class="sb" style="left:1336px;top:368px;width:57px;height:19px;font-size:12.8px">Min</div>
<div class="sb" style="left:1394px;top:368px;width:57px;height:19px;font-size:12.8px">Max</div>
<div class="sb" style="left:1452px;top:368px;width:67px;height:19px;font-size:12.8px">Интервал</div>
<div class="sb" style="left:1520px;top:368px;width:57px;height:19px;font-size:12.8px">DX</div>
<div class="sb" style="left:1578px;top:368px;width:57px;height:19px;font-size:12.8px">VAR</div>
<div class="sb" style="left:1638px;top:368px;width:53px;height:19px;font-size:12.8px;text-align:left">ASS</div>
<div class="sb" style="left:1696px;top:368px;width:53px;height:19px;font-size:12.8px;text-align:left">ЭКС</div>
<div class="sb" style="left:1752px;top:368px;width:57px;height:19px;font-size:12.8px;color:#00f">b0</div>
<div class="sb" style="left:1810px;top:368px;width:57px;height:19px;font-size:12.8px;color:#00f">b1</div>
<div class="rt" style="left:1688px;top:368px;width:0px;height:0px;"></div>
<div class="rt" style="left:1746px;top:368px;width:0px;height:0px;"></div>
<div class="rt" style="left:1862px;top:368px;width:0px;height:0px;"></div>
<div class="sb" style="left:1278px;top:444px;width:57px;height:19px;">100,00%</div>
<div class="sb" style="left:1336px;top:444px;width:57px;height:19px;">100,00%</div>
<div class="sb" style="left:1394px;top:444px;width:57px;height:19px;">100,00%</div>
<div class="s" style="left:1452px;top:444px;width:67px;height:19px;">0,00%</div>
<div class="s" style="left:1520px;top:444px;width:57px;height:19px;">0,00%</div>
<div class="s" style="left:1578px;top:444px;width:57px;height:19px;">0,00%</div>
<div class="s" style="left:1636px;top:444px;width:57px;height:19px;">0,00</div>
<div class="s" style="left:1694px;top:444px;width:57px;height:19px;">-3,46</div>
<div class="sb" style="left:1278px;top:463px;width:57px;height:19px;">100,65%</div>
<div class="sb" style="left:1336px;top:463px;width:57px;height:19px;">100,30%</div>
<div class="sb" style="left:1394px;top:463px;width:57px;height:19px;">101,01%</div>
<div class="s" style="left:1452px;top:463px;width:67px;height:19px;">0,71%</div>
<div class="s" style="left:1520px;top:463px;width:57px;height:19px;">0,23%</div>
<div class="s" style="left:1578px;top:463px;width:57px;height:19px;">0,23%</div>
<div class="s" style="left:1636px;top:463px;width:57px;height:19px;">0,17</div>
<div class="s" style="left:1694px;top:463px;width:57px;height:19px;">-1,29</div>
<div class="sb" style="left:1278px;top:482px;width:57px;height:19px;">85,94%</div>
<div class="sb" style="left:1336px;top:482px;width:57px;height:19px;">84,74%</div>
<div class="sb" style="left:1394px;top:482px;width:57px;height:19px;">87,16%</div>
<div class="s" style="left:1452px;top:482px;width:67px;height:19px;">2,42%</div>
<div class="s" style="left:1520px;top:482px;width:57px;height:19px;">0,67%</div>
<div class="s" style="left:1578px;top:482px;width:57px;height:19px;">0,77%</div>
<div class="s" style="left:1636px;top:482px;width:57px;height:19px;">0,15</div>
<div class="s" style="left:1694px;top:482px;width:57px;height:19px;">-0,52</div>
<div class="s" style="left:1278px;top:501px;width:57px;height:19px;">1,48%</div>
<div class="s" style="left:1336px;top:501px;width:57px;height:19px;">1,32%</div>
<div class="s" style="left:1394px;top:501px;width:57px;height:19px;">1,70%</div>
<div class="s" style="left:1452px;top:501px;width:67px;height:19px;">0,39%</div>
<div class="s" style="left:1520px;top:501px;width:57px;height:19px;">0,10%</div>
<div class="s" style="left:1578px;top:501px;width:57px;height:19px;">6,62%</div>
<div class="s" style="left:1636px;top:501px;width:57px;height:19px;">0,70</div>
<div class="s" style="left:1694px;top:501px;width:57px;height:19px;">0,25</div>
<div class="s" style="left:1278px;top:520px;width:57px;height:19px;">1,08%</div>
<div class="s" style="left:1336px;top:520px;width:57px;height:19px;">0,91%</div>
<div class="s" style="left:1394px;top:520px;width:57px;height:19px;">1,27%</div>
<div class="s" style="left:1452px;top:520px;width:67px;height:19px;">0,35%</div>
<div class="s" style="left:1520px;top:520px;width:57px;height:19px;">0,11%</div>
<div class="s" style="left:1578px;top:520px;width:57px;height:19px;">10,17%</div>
<div class="s" style="left:1636px;top:520px;width:57px;height:19px;">0,42</div>
<div class="s" style="left:1694px;top:520px;width:57px;height:19px;">-1,10</div>
<div class="s" style="left:1278px;top:539px;width:57px;height:19px;">0,40%</div>
<div class="s" style="left:1336px;top:539px;width:57px;height:19px;">0,32%</div>
<div class="s" style="left:1394px;top:539px;width:57px;height:19px;">0,44%</div>
<div class="s" style="left:1452px;top:539px;width:67px;height:19px;">0,12%</div>
<div class="s" style="left:1520px;top:539px;width:57px;height:19px;">0,04%</div>
<div class="s" style="left:1578px;top:539px;width:57px;height:19px;">9,23%</div>
<div class="s" style="left:1636px;top:539px;width:57px;height:19px;">-1,13</div>
<div class="s" style="left:1694px;top:539px;width:57px;height:19px;">-0,04</div>
<div class="s" style="left:1278px;top:558px;width:57px;height:19px;">0,47%</div>
<div class="s" style="left:1336px;top:558px;width:57px;height:19px;">0,38%</div>
<div class="s" style="left:1394px;top:558px;width:57px;height:19px;">0,62%</div>
<div class="s" style="left:1452px;top:558px;width:67px;height:19px;">0,24%</div>
<div class="s" style="left:1520px;top:558px;width:57px;height:19px;">0,08%</div>
<div class="s" style="left:1578px;top:558px;width:57px;height:19px;">16,13%</div>
<div class="s" style="left:1636px;top:558px;width:57px;height:19px;">0,71</div>
<div class="s" style="left:1694px;top:558px;width:57px;height:19px;">-0,67</div>
<div class="s" style="left:1278px;top:577px;width:57px;height:19px;">0,11%</div>
<div class="s" style="left:1336px;top:577px;width:57px;height:19px;">0,09%</div>
<div class="s" style="left:1394px;top:577px;width:57px;height:19px;">0,15%</div>
<div class="s" style="left:1452px;top:577px;width:67px;height:19px;">0,06%</div>
<div class="s" style="left:1520px;top:577px;width:57px;height:19px;">0,02%</div>
<div class="s" style="left:1578px;top:577px;width:57px;height:19px;">17,56%</div>
<div class="s" style="left:1636px;top:577px;width:57px;height:19px;">0,72</div>
<div class="s" style="left:1694px;top:577px;width:57px;height:19px;">-0,96</div>
<div class="s" style="left:1278px;top:596px;width:57px;height:19px;">0,15%</div>
<div class="s" style="left:1336px;top:596px;width:57px;height:19px;">0,12%</div>
<div class="s" style="left:1394px;top:596px;width:57px;height:19px;">0,19%</div>
<div class="s" style="left:1452px;top:596px;width:67px;height:19px;">0,07%</div>
<div class="s" style="left:1520px;top:596px;width:57px;height:19px;">0,02%</div>
<div class="s" style="left:1578px;top:596px;width:57px;height:19px;">11,02%</div>
<div class="s" style="left:1636px;top:596px;width:57px;height:19px;">-0,29</div>
<div class="s" style="left:1694px;top:596px;width:57px;height:19px;">-0,20</div>
<div class="s" style="left:1278px;top:615px;width:57px;height:19px;">0,21%</div>
<div class="s" style="left:1336px;top:615px;width:57px;height:19px;">0,13%</div>
<div class="s" style="left:1394px;top:615px;width:57px;height:19px;">0,32%</div>
<div class="s" style="left:1452px;top:615px;width:67px;height:19px;">0,19%</div>
<div class="s" style="left:1520px;top:615px;width:57px;height:19px;">0,06%</div>
<div class="s" style="left:1578px;top:615px;width:57px;height:19px;">28,68%</div>
<div class="s" style="left:1636px;top:615px;width:57px;height:19px;">0,44</div>
<div class="s" style="left:1694px;top:615px;width:57px;height:19px;">-0,85</div>
<div class="s" style="left:1278px;top:634px;width:57px;height:19px;">0,41%</div>
<div class="s" style="left:1336px;top:634px;width:57px;height:19px;">0,36%</div>
<div class="s" style="left:1394px;top:634px;width:57px;height:19px;">0,47%</div>
<div class="s" style="left:1452px;top:634px;width:67px;height:19px;">0,10%</div>
<div class="s" style="left:1520px;top:634px;width:57px;height:19px;">0,03%</div>
<div class="s" style="left:1578px;top:634px;width:57px;height:19px;">6,70%</div>
<div class="s" style="left:1636px;top:634px;width:57px;height:19px;">0,39</div>
<div class="s" style="left:1694px;top:634px;width:57px;height:19px;">-0,57</div>
<div class="sb" style="left:1278px;top:653px;width:57px;height:19px;">6,08%</div>
<div class="sb" style="left:1336px;top:653px;width:57px;height:19px;">5,28%</div>
<div class="sb" style="left:1394px;top:653px;width:57px;height:19px;">6,92%</div>
<div class="s" style="left:1452px;top:653px;width:67px;height:19px;">1,65%</div>
<div class="s" style="left:1520px;top:653px;width:57px;height:19px;">0,49%</div>
<div class="s" style="left:1578px;top:653px;width:57px;height:19px;">8,07%</div>
<div class="s" style="left:1636px;top:653px;width:57px;height:19px;">-0,01</div>
<div class="s" style="left:1694px;top:653px;width:57px;height:19px;">-0,98</div>
<div class="sb" style="left:1278px;top:672px;width:57px;height:19px;">10,09%</div>
<div class="sb" style="left:1336px;top:672px;width:57px;height:19px;">8,56%</div>
<div class="sb" style="left:1394px;top:672px;width:57px;height:19px;">13,72%</div>
<div class="s" style="left:1452px;top:672px;width:67px;height:19px;">5,16%</div>
<div class="s" style="left:1520px;top:672px;width:57px;height:19px;">1,67%</div>
<div class="s" style="left:1578px;top:672px;width:57px;height:19px;">16,60%</div>
<div class="s" style="left:1636px;top:672px;width:57px;height:19px;">1,00</div>
<div class="s" style="left:1694px;top:672px;width:57px;height:19px;">-0,25</div>
<div class="sb" style="left:1278px;top:691px;width:57px;height:19px;">6,33%</div>
<div class="sb" style="left:1336px;top:691px;width:57px;height:19px;">5,35%</div>
<div class="sb" style="left:1394px;top:691px;width:57px;height:19px;">8,58%</div>
<div class="s" style="left:1452px;top:691px;width:67px;height:19px;">3,23%</div>
<div class="s" style="left:1520px;top:691px;width:57px;height:19px;">1,06%</div>
<div class="s" style="left:1578px;top:691px;width:57px;height:19px;">16,71%</div>
<div class="s" style="left:1636px;top:691px;width:57px;height:19px;">0,97</div>
<div class="s" style="left:1694px;top:691px;width:57px;height:19px;">-0,30</div>
<div class="s" style="left:1278px;top:710px;width:57px;height:19px;">0,35%</div>
<div class="s" style="left:1336px;top:710px;width:57px;height:19px;">0,27%</div>
<div class="s" style="left:1394px;top:710px;width:57px;height:19px;">0,49%</div>
<div class="s" style="left:1452px;top:710px;width:67px;height:19px;">0,23%</div>
<div class="s" style="left:1520px;top:710px;width:57px;height:19px;">0,08%</div>
<div class="s" style="left:1578px;top:710px;width:57px;height:19px;">23,74%</div>
<div class="s" style="left:1636px;top:710px;width:57px;height:19px;">0,43</div>
<div class="s" style="left:1694px;top:710px;width:57px;height:19px;">-1,58</div>
<div class="s" style="left:1278px;top:729px;width:57px;height:19px;">0,34%</div>
<div class="s" style="left:1336px;top:729px;width:57px;height:19px;">0,28%</div>
<div class="s" style="left:1394px;top:729px;width:57px;height:19px;">0,43%</div>
<div class="s" style="left:1452px;top:729px;width:67px;height:19px;">0,15%</div>
<div class="s" style="left:1520px;top:729px;width:57px;height:19px;">0,06%</div>
<div class="s" style="left:1578px;top:729px;width:57px;height:19px;">16,92%</div>
<div class="s" style="left:1636px;top:729px;width:57px;height:19px;">0,40</div>
<div class="s" style="left:1694px;top:729px;width:57px;height:19px;">-1,64</div>
<div class="s" style="left:1278px;top:748px;width:57px;height:19px;">0,33%</div>
<div class="s" style="left:1336px;top:748px;width:57px;height:19px;">0,24%</div>
<div class="s" style="left:1394px;top:748px;width:57px;height:19px;">0,50%</div>
<div class="s" style="left:1452px;top:748px;width:67px;height:19px;">0,25%</div>
<div class="s" style="left:1520px;top:748px;width:57px;height:19px;">0,08%</div>
<div class="s" style="left:1578px;top:748px;width:57px;height:19px;">23,00%</div>
<div class="s" style="left:1636px;top:748px;width:57px;height:19px;">1,00</div>
<div class="s" style="left:1694px;top:748px;width:57px;height:19px;">0,04</div>
<div class="s" style="left:1278px;top:767px;width:57px;height:19px;">1,10%</div>
<div class="s" style="left:1336px;top:767px;width:57px;height:19px;">0,97%</div>
<div class="s" style="left:1394px;top:767px;width:57px;height:19px;">1,37%</div>
<div class="s" style="left:1452px;top:767px;width:67px;height:19px;">0,40%</div>
<div class="s" style="left:1520px;top:767px;width:57px;height:19px;">0,12%</div>
<div class="s" style="left:1578px;top:767px;width:57px;height:19px;">10,87%</div>
<div class="s" style="left:1636px;top:767px;width:57px;height:19px;">1,01</div>
<div class="s" style="left:1694px;top:767px;width:57px;height:19px;">0,14</div>
<div class="s" style="left:1278px;top:786px;width:57px;height:19px;">0,86%</div>
<div class="s" style="left:1336px;top:786px;width:57px;height:19px;">0,73%</div>
<div class="s" style="left:1394px;top:786px;width:57px;height:19px;">1,17%</div>
<div class="s" style="left:1452px;top:786px;width:67px;height:19px;">0,43%</div>
<div class="s" style="left:1520px;top:786px;width:57px;height:19px;">0,12%</div>
<div class="s" style="left:1578px;top:786px;width:57px;height:19px;">14,41%</div>
<div class="s" style="left:1636px;top:786px;width:57px;height:19px;">1,36</div>
<div class="s" style="left:1694px;top:786px;width:57px;height:19px;">1,01</div>
<div class="s" style="left:1278px;top:805px;width:57px;height:19px;">0,93%</div>
<div class="s" style="left:1336px;top:805px;width:57px;height:19px;">0,71%</div>
<div class="s" style="left:1394px;top:805px;width:57px;height:19px;">1,41%</div>
<div class="s" style="left:1452px;top:805px;width:67px;height:19px;">0,71%</div>
<div class="s" style="left:1520px;top:805px;width:57px;height:19px;">0,22%</div>
<div class="s" style="left:1578px;top:805px;width:57px;height:19px;">23,83%</div>
<div class="s" style="left:1636px;top:805px;width:57px;height:19px;">1,04</div>
<div class="s" style="left:1694px;top:805px;width:57px;height:19px;">-0,08</div>
<div class="s" style="left:1278px;top:824px;width:57px;height:19px;">0,32%</div>
<div class="s" style="left:1336px;top:824px;width:57px;height:19px;">0,26%</div>
<div class="s" style="left:1394px;top:824px;width:57px;height:19px;">0,47%</div>
<div class="s" style="left:1452px;top:824px;width:67px;height:19px;">0,20%</div>
<div class="s" style="left:1520px;top:824px;width:57px;height:19px;">0,07%</div>
<div class="s" style="left:1578px;top:824px;width:57px;height:19px;">21,06%</div>
<div class="s" style="left:1636px;top:824px;width:57px;height:19px;">1,28</div>
<div class="s" style="left:1694px;top:824px;width:57px;height:19px;">0,31</div>
<div class="s" style="left:1278px;top:843px;width:57px;height:19px;">0,73%</div>
<div class="s" style="left:1336px;top:843px;width:57px;height:19px;">0,51%</div>
<div class="s" style="left:1394px;top:843px;width:57px;height:19px;">1,00%</div>
<div class="s" style="left:1452px;top:843px;width:67px;height:19px;">0,49%</div>
<div class="s" style="left:1520px;top:843px;width:57px;height:19px;">0,15%</div>
<div class="s" style="left:1578px;top:843px;width:57px;height:19px;">20,83%</div>
<div class="s" style="left:1636px;top:843px;width:57px;height:19px;">0,53</div>
<div class="s" style="left:1694px;top:843px;width:57px;height:19px;">-0,83</div>
<div class="s" style="left:1278px;top:862px;width:57px;height:19px;">0,51%</div>
<div class="s" style="left:1336px;top:862px;width:57px;height:19px;">0,47%</div>
<div class="s" style="left:1394px;top:862px;width:57px;height:19px;">0,63%</div>
<div class="s" style="left:1452px;top:862px;width:67px;height:19px;">0,16%</div>
<div class="s" style="left:1520px;top:862px;width:57px;height:19px;">0,04%</div>
<div class="s" style="left:1578px;top:862px;width:57px;height:19px;">7,46%</div>
<div class="s" style="left:1636px;top:862px;width:57px;height:19px;">1,75</div>
<div class="s" style="left:1694px;top:862px;width:57px;height:19px;">3,30</div>
<div class="s" style="left:1278px;top:881px;width:57px;height:19px;">0,37%</div>
<div class="s" style="left:1336px;top:881px;width:57px;height:19px;">0,26%</div>
<div class="s" style="left:1394px;top:881px;width:57px;height:19px;">0,53%</div>
<div class="s" style="left:1452px;top:881px;width:67px;height:19px;">0,27%</div>
<div class="s" style="left:1520px;top:881px;width:57px;height:19px;">0,10%</div>
<div class="s" style="left:1578px;top:881px;width:57px;height:19px;">27,27%</div>
<div class="s" style="left:1636px;top:881px;width:57px;height:19px;">0,46</div>
<div class="s" style="left:1694px;top:881px;width:57px;height:19px;">-1,53</div>
<div class="s" style="left:1278px;top:900px;width:57px;height:19px;">0,49%</div>
<div class="s" style="left:1336px;top:900px;width:57px;height:19px;">0,43%</div>
<div class="s" style="left:1394px;top:900px;width:57px;height:19px;">0,61%</div>
<div class="s" style="left:1452px;top:900px;width:67px;height:19px;">0,18%</div>
<div class="s" style="left:1520px;top:900px;width:57px;height:19px;">0,06%</div>
<div class="s" style="left:1578px;top:900px;width:57px;height:19px;">11,40%</div>
<div class="s" style="left:1636px;top:900px;width:57px;height:19px;">0,70</div>
<div class="s" style="left:1694px;top:900px;width:57px;height:19px;">-0,78</div>
<div class="s" style="left:1278px;top:919px;width:57px;height:19px;">3,76%</div>
<div class="s" style="left:1336px;top:919px;width:57px;height:19px;">3,17%</div>
<div class="sb" style="left:1394px;top:919px;width:57px;height:19px;">5,14%</div>
<div class="s" style="left:1452px;top:919px;width:67px;height:19px;">1,97%</div>
<div class="s" style="left:1520px;top:919px;width:57px;height:19px;">0,62%</div>
<div class="s" style="left:1578px;top:919px;width:57px;height:19px;">16,52%</div>
<div class="s" style="left:1636px;top:919px;width:57px;height:19px;">1,02</div>
<div class="s" style="left:1694px;top:919px;width:57px;height:19px;">-0,19</div>
<div class="s" style="left:1278px;top:938px;width:57px;height:19px;">1,25%</div>
<div class="s" style="left:1336px;top:938px;width:57px;height:19px;">1,19%</div>
<div class="s" style="left:1394px;top:938px;width:57px;height:19px;">1,36%</div>
<div class="s" style="left:1452px;top:938px;width:67px;height:19px;">0,18%</div>
<div class="s" style="left:1520px;top:938px;width:57px;height:19px;">0,05%</div>
<div class="s" style="left:1578px;top:938px;width:57px;height:19px;">3,92%</div>
<div class="s" style="left:1636px;top:938px;width:57px;height:19px;">0,74</div>
<div class="s" style="left:1694px;top:938px;width:57px;height:19px;">-0,22</div>
<div class="s" style="left:1278px;top:957px;width:57px;height:19px;">0,26%</div>
<div class="s" style="left:1336px;top:957px;width:57px;height:19px;">0,14%</div>
<div class="s" style="left:1394px;top:957px;width:57px;height:19px;">0,51%</div>
<div class="s" style="left:1452px;top:957px;width:67px;height:19px;">0,37%</div>
<div class="s" style="left:1520px;top:957px;width:57px;height:19px;">0,11%</div>
<div class="s" style="left:1578px;top:957px;width:57px;height:19px;">43,65%</div>
<div class="s" style="left:1636px;top:957px;width:57px;height:19px;">0,99</div>
<div class="s" style="left:1694px;top:957px;width:57px;height:19px;">-0,22</div>
<div class="s" style="left:1278px;top:976px;width:57px;height:19px;">0,22%</div>
<div class="s" style="left:1336px;top:976px;width:57px;height:19px;">0,09%</div>
<div class="s" style="left:1394px;top:976px;width:57px;height:19px;">0,57%</div>
<div class="s" style="left:1452px;top:976px;width:67px;height:19px;">0,47%</div>
<div class="s" style="left:1520px;top:976px;width:57px;height:19px;">0,13%</div>
<div class="s" style="left:1578px;top:976px;width:57px;height:19px;">60,20%</div>
<div class="s" style="left:1636px;top:976px;width:57px;height:19px;">1,36</div>
<div class="s" style="left:1694px;top:976px;width:57px;height:19px;">1,07</div>
<div style="left:1276px;top:282px;width:593px;height:87px;background:#fde9d9;border:2px solid #217346;font-family:'Liberation Serif',serif;font-weight:bold;font-size:21px;line-height:27px;text-align:center;color:#00f;white-space:pre;padding-top:1px"><span style="color:#f00">РИСК</span> АНАЛИЗ ДОРОШКО-САМАРИНА =
<span style="color:#f00">ЭФФЕКТИВНОСТЬ</span> - КОРРУПЦИЯ -
ЗАКОНОДАТЕЛЬСТВО</div>
<div style="left:1864px;top:365px;width:6px;height:6px;background:#217346;border:1px solid #fff;border-right:0;border-bottom:0"></div>
<div style="left:0px;top:118px;width:1894px;height:20px;background:#fff"></div>
<div style="left:1278px;top:118px;width:590px;height:18px;background:#e1e1e1"></div>
<div style="left:1277px;top:136px;width:591px;height:2px;background:#217346"></div>
<div style="left:27px;top:137px;width:1250px;height:1px;background:#ababab"></div>
<div style="left:1868px;top:137px;width:27px;height:1px;background:#ababab"></div>
<div class="ch" style="left:27px;width:40px;">A</div>
<div style="left:67px;top:119px;width:1px;height:18px;background:#d4d4d4"></div>
<div class="ch" style="left:68px;width:364px;">B</div>
<div style="left:432px;top:119px;width:1px;height:18px;background:#d4d4d4"></div>
<div class="ch" style="left:433px;width:76px;">C</div>
<div class="ch" style="left:510px;width:63px;">P</div>
<div style="left:573px;top:119px;width:1px;height:18px;background:#d4d4d4"></div>
<div class="ch" style="left:574px;width:63px;">Q</div>
<div style="left:637px;top:119px;width:1px;height:18px;background:#d4d4d4"></div>
<div class="ch" style="left:638px;width:63px;">R</div>
<div style="left:701px;top:119px;width:1px;height:18px;background:#d4d4d4"></div>
<div class="ch" style="left:702px;width:63px;">S</div>
<div style="left:765px;top:119px;width:1px;height:18px;background:#d4d4d4"></div>
<div class="ch" style="left:766px;width:63px;">T</div>
<div style="left:829px;top:119px;width:1px;height:18px;background:#d4d4d4"></div>
<div class="ch" style="left:830px;width:63px;">U</div>
<div style="left:893px;top:119px;width:1px;height:18px;background:#d4d4d4"></div>
<div class="ch" style="left:894px;width:63px;">V</div>
<div style="left:957px;top:119px;width:1px;height:18px;background:#d4d4d4"></div>
<div class="ch" style="left:958px;width:63px;">W</div>
<div style="left:1021px;top:119px;width:1px;height:18px;background:#d4d4d4"></div>
<div class="ch" style="left:1022px;width:63px;">X</div>
<div style="left:1085px;top:119px;width:1px;height:18px;background:#d4d4d4"></div>
<div class="ch" style="left:1086px;width:63px;">Y</div>
<div style="left:1149px;top:119px;width:1px;height:18px;background:#d4d4d4"></div>
<div class="ch" style="left:1150px;width:63px;">Z</div>
<div style="left:1213px;top:119px;width:1px;height:18px;background:#d4d4d4"></div>
<div class="ch" style="left:1214px;width:63px;">AA</div>
<div style="left:1277px;top:119px;width:1px;height:18px;background:#d4d4d4"></div>
<div class="ch" style="left:1278px;width:57px;color:#217346;font-weight:bold;">AB</div>
<div style="left:1335px;top:119px;width:1px;height:18px;background:#c9c9c9"></div>
<div class="ch" style="left:1336px;width:57px;color:#217346;font-weight:bold;">AC</div>
<div style="left:1393px;top:119px;width:1px;height:18px;background:#c9c9c9"></div>
<div class="ch" style="left:1394px;width:57px;color:#217346;font-weight:bold;">AD</div>
<div style="left:1451px;top:119px;width:1px;height:18px;background:#c9c9c9"></div>
<div class="ch" style="left:1452px;width:67px;color:#217346;font-weight:bold;">AE</div>
<div style="left:1519px;top:119px;width:1px;height:18px;background:#c9c9c9"></div>
<div class="ch" style="left:1520px;width:57px;color:#217346;font-weight:bold;">AF</div>
<div style="left:1577px;top:119px;width:1px;height:18px;background:#c9c9c9"></div>
<div class="ch" style="left:1578px;width:57px;color:#217346;font-weight:bold;">AG</div>
<div style="left:1635px;top:119px;width:1px;height:18px;background:#c9c9c9"></div>
<div class="ch" style="left:1636px;width:57px;color:#217346;font-weight:bold;">AH</div>
<div style="left:1693px;top:119px;width:1px;height:18px;background:#c9c9c9"></div>
<div class="ch" style="left:1694px;width:57px;color:#217346;font-weight:bold;">AI</div>
<div style="left:1751px;top:119px;width:1px;height:18px;background:#c9c9c9"></div>
<div class="ch" style="left:1752px;width:57px;color:#217346;font-weight:bold;">AJ</div>
<div style="left:1809px;top:119px;width:1px;height:18px;background:#c9c9c9"></div>
<div class="ch" style="left:1810px;width:57px;color:#217346;font-weight:bold;">AK</div>
<div style="left:1867px;top:119px;width:1px;height:18px;background:#c9c9c9"></div>
<div style="left:1868px;top:118px;width:26px;height:19px;overflow:hidden"><div class="ch" style="left:0;top:0;width:64px;color:#444">AL</div></div>
<svg class="a" style="left:10px;top:121px" width="14" height="14"><path d="M13 1V13H1Z" fill="#d6d6d6"/></svg>
<div style="left:0px;top:138px;width:27px;height:852px;background:#fff"></div>
<div style="left:26px;top:138px;width:1px;height:852px;background:#ababab"></div>
<div style="left:0px;top:284px;width:26px;height:84px;background:#e1e1e1"></div>
<div style="left:25px;top:283px;width:2px;height:85px;background:#217346"></div>
<div class="rh" style="top:144px;height:19px;line-height:21px;">1</div>
<div style="left:0px;top:165px;width:26px;height:1px;background:#d4d4d4"></div>
<div class="rh" style="top:172px;height:19px;line-height:21px;">2</div>
<div style="left:0px;top:191px;width:26px;height:1px;background:#d4d4d4"></div>
<div class="rh" style="top:198px;height:19px;line-height:21px;">3</div>
<div style="left:0px;top:217px;width:26px;height:1px;background:#d4d4d4"></div>
<div class="rh" style="top:235px;height:19px;line-height:21px;">4</div>
<div style="left:0px;top:254px;width:26px;height:1px;background:#d4d4d4"></div>
<div class="rh" style="top:262px;height:19px;line-height:21px;">5</div>
<div style="left:0px;top:283px;width:26px;height:1px;background:#d4d4d4"></div>
<div class="rh" style="top:285px;height:19px;line-height:21px;color:#217346;font-weight:bold;">6</div>
<div style="left:0px;top:304px;width:26px;height:1px;background:#c9c9c9"></div>
<div class="rh" style="top:306px;height:19px;line-height:21px;color:#217346;font-weight:bold;">7</div>
<div style="left:0px;top:325px;width:26px;height:1px;background:#c9c9c9"></div>
<div class="rh" style="top:327px;height:19px;line-height:21px;color:#217346;font-weight:bold;">8</div>
<div style="left:0px;top:346px;width:26px;height:1px;background:#c9c9c9"></div>
<div class="rh" style="top:348px;height:19px;line-height:21px;color:#217346;font-weight:bold;">9</div>
<div style="left:0px;top:367px;width:26px;height:1px;background:#c9c9c9"></div>
<div class="rh" style="top:367px;height:19px;line-height:21px;">10</div>
<div style="left:0px;top:386px;width:26px;height:1px;background:#d4d4d4"></div>
<div class="rh" style="top:386px;height:19px;line-height:21px;">11</div>
<div style="left:0px;top:405px;width:26px;height:1px;background:#d4d4d4"></div>
<div class="rh" style="top:405px;height:19px;line-height:21px;">12</div>
<div style="left:0px;top:424px;width:26px;height:1px;background:#d4d4d4"></div>
<div class="rh" style="top:424px;height:19px;line-height:21px;">13</div>
<div style="left:0px;top:443px;width:26px;height:1px;background:#d4d4d4"></div>
<div class="rh" style="top:443px;height:19px;line-height:21px;">14</div>
<div style="left:0px;top:462px;width:26px;height:1px;background:#d4d4d4"></div>
<div class="rh" style="top:462px;height:19px;line-height:21px;">15</div>
<div style="left:0px;top:481px;width:26px;height:1px;background:#d4d4d4"></div>
<div class="rh" style="top:481px;height:19px;line-height:21px;">16</div>
<div style="left:0px;top:500px;width:26px;height:1px;background:#d4d4d4"></div>
<div class="rh" style="top:500px;height:19px;line-height:21px;">17</div>
<div style="left:0px;top:519px;width:26px;height:1px;background:#d4d4d4"></div>
<div class="rh" style="top:519px;height:19px;line-height:21px;">18</div>
<div style="left:0px;top:538px;width:26px;height:1px;background:#d4d4d4"></div>
<div class="rh" style="top:538px;height:19px;line-height:21px;">19</div>
<div style="left:0px;top:557px;width:26px;height:1px;background:#d4d4d4"></div>
<div class="rh" style="top:557px;height:19px;line-height:21px;">20</div>
<div style="left:0px;top:576px;width:26px;height:1px;background:#d4d4d4"></div>
<div class="rh" style="top:576px;height:19px;line-height:21px;">21</div>
<div style="left:0px;top:595px;width:26px;height:1px;background:#d4d4d4"></div>
<div class="rh" style="top:595px;height:19px;line-height:21px;">22</div>
<div style="left:0px;top:614px;width:26px;height:1px;background:#d4d4d4"></div>
<div class="rh" style="top:614px;height:19px;line-height:21px;">23</div>
<div style="left:0px;top:633px;width:26px;height:1px;background:#d4d4d4"></div>
<div class="rh" style="top:633px;height:19px;line-height:21px;">24</div>
<div style="left:0px;top:652px;width:26px;height:1px;background:#d4d4d4"></div>
<div class="rh" style="top:652px;height:19px;line-height:21px;">25</div>
<div style="left:0px;top:671px;width:26px;height:1px;background:#d4d4d4"></div>
<div class="rh" style="top:671px;height:19px;line-height:21px;">26</div>
<div style="left:0px;top:690px;width:26px;height:1px;background:#d4d4d4"></div>
<div class="rh" style="top:690px;height:19px;line-height:21px;">27</div>
<div style="left:0px;top:709px;width:26px;height:1px;background:#d4d4d4"></div>
<div class="rh" style="top:709px;height:19px;line-height:21px;">28</div>
<div style="left:0px;top:728px;width:26px;height:1px;background:#d4d4d4"></div>
<div class="rh" style="top:728px;height:19px;line-height:21px;">29</div>
<div style="left:0px;top:747px;width:26px;height:1px;background:#d4d4d4"></div>
<div class="rh" style="top:747px;height:19px;line-height:21px;">30</div>
<div style="left:0px;top:766px;width:26px;height:1px;background:#d4d4d4"></div>
<div class="rh" style="top:766px;height:19px;line-height:21px;">31</div>
<div style="left:0px;top:785px;width:26px;height:1px;background:#d4d4d4"></div>
<div class="rh" style="top:785px;height:19px;line-height:21px;">32</div>
<div style="left:0px;top:804px;width:26px;height:1px;background:#d4d4d4"></div>
<div class="rh" style="top:804px;height:19px;line-height:21px;">33</div>
<div style="left:0px;top:823px;width:26px;height:1px;background:#d4d4d4"></div>
<div class="rh" style="top:823px;height:19px;line-height:21px;">34</div>
<div style="left:0px;top:842px;width:26px;height:1px;background:#d4d4d4"></div>
<div class="rh" style="top:842px;height:19px;line-height:21px;">35</div>
<div style="left:0px;top:861px;width:26px;height:1px;background:#d4d4d4"></div>
<div class="rh" style="top:861px;height:19px;line-height:21px;">36</div>
<div style="left:0px;top:880px;width:26px;height:1px;background:#d4d4d4"></div>
<div class="rh" style="top:880px;height:19px;line-height:21px;">37</div>
<div style="left:0px;top:899px;width:26px;height:1px;background:#d4d4d4"></div>
<div class="rh" style="top:899px;height:19px;line-height:21px;">38</div>
<div style="left:0px;top:918px;width:26px;height:1px;background:#d4d4d4"></div>
<div class="rh" style="top:918px;height:19px;line-height:21px;">39</div>
<div style="left:0px;top:937px;width:26px;height:1px;background:#d4d4d4"></div>
<div class="rh" style="top:937px;height:19px;line-height:21px;">40</div>
<div style="left:0px;top:956px;width:26px;height:1px;background:#d4d4d4"></div>
<div class="rh" style="top:956px;height:19px;line-height:21px;">41</div>
<div style="left:0px;top:975px;width:26px;height:1px;background:#d4d4d4"></div>
<div class="rh" style="top:975px;height:19px;line-height:21px;">42</div>
<div style="left:509px;top:118px;width:1px;height:872px;background:#9b9b9b"></div>
<div style="left:0px;top:443px;width:1894px;height:1px;background:#9b9b9b"></div>
</div>
<div style="left:1894px;top:137px;width:1px;height:854px;background:#ababab"></div>
<div style="left:1895px;top:118px;width:25px;height:873px;background:#fff"></div>
<div style="left:1898px;top:120px;width:19px;height:18px;background:#fff;border:1px solid #ababab"></div>
<svg class="a" style="left:1902px;top:125px" width="11" height="8"><path d="M0 6.5L5.5 1L11 6.5Z" fill="#777"/></svg>
<div style="left:1898px;top:139px;width:19px;height:833px;background:#f0f0f0"></div>
<div style="left:1898px;top:139px;width:19px;height:213px;background:#fff;border:1px solid #ababab"></div>
<div style="left:1898px;top:972px;width:19px;height:18px;background:#fff;border:1px solid #ababab"></div>
<svg class="a" style="left:1902px;top:978px" width="11" height="8"><path d="M0 1.5L5.5 7L11 1.5Z" fill="#777"/></svg>
<div style="left:0px;top:991px;width:1920px;height:28px;background:#fff"></div>
<div style="left:0px;top:990px;width:1895px;height:1px;background:#ababab"></div>
<svg class="a" style="left:24px;top:998px" width="44" height="12"><path d="M8 1V11L2.5 6Z" fill="#c6c6c6"/><path d="M33 1V11L38.5 6Z" fill="#217346"/></svg>
<div style="left:103px;top:994px;width:1px;height:21px;background:#c6c6c6"></div>
<div class="tab" style="left:106px;width:49px;background:#ffc000;color:#000">Sun</div>
<div style="left:157px;top:994px;width:1px;height:21px;background:#c6c6c6"></div>
<div class="tab" style="left:160px;width:52px;background:#993300;color:#fff">1Oil</div>
<div style="left:214px;top:994px;width:1px;height:21px;background:#c6c6c6"></div>
<div class="tab" style="left:217px;width:42px;background:#ffff00;color:#000">SO</div>
<div style="left:261px;top:994px;width:1px;height:21px;background:#c6c6c6"></div>
<div class="tab" style="left:264px;width:71px;background:#ff0000;color:#fff">ГУЛАГ</div>
<div style="left:337px;top:994px;width:1px;height:21px;background:#c6c6c6"></div>
<div class="tab" style="left:340px;width:54px;background:#ff0000;color:#fff">ВПК</div>
<div style="left:396px;top:994px;width:1px;height:21px;background:#c6c6c6"></div>
<div class="tab" style="left:399px;width:78px;background:#ffc000;color:#000">НАЛОГ</div>
<div style="left:479px;top:994px;width:1px;height:21px;background:#c6c6c6"></div>
<div class="tab" style="left:482px;width:53px;background:#00b050;color:#000">USA</div>
<div style="left:537px;top:994px;width:1px;height:21px;background:#c6c6c6"></div>
<div class="tab" style="left:540px;width:41px;background:#00b050;color:#000">KB</div>
<div style="left:583px;top:994px;width:1px;height:21px;background:#c6c6c6"></div>
<div class="tab" style="left:586px;width:67px;background:#00b050;color:#000">CW19</div>
<div style="left:655px;top:994px;width:1px;height:21px;background:#c6c6c6"></div>
<div class="tab" style="left:658px;width:39px;background:#ffc000;color:#000">Y1</div>
<div style="left:699px;top:994px;width:1px;height:21px;background:#c6c6c6"></div>
<div class="tab" style="left:700px;width:49px;background:#f3f3f3;color:#666">Ass</div>
<div style="left:751px;top:994px;width:1px;height:21px;background:#c6c6c6"></div>
<div class="tab" style="left:752px;width:39px;background:#ffc000;color:#000">Y2</div>
<div style="left:793px;top:994px;width:1px;height:21px;background:#c6c6c6"></div>
<div class="tab" style="left:796px;width:39px;background:#ffc000;color:#000">Y3</div>
<div style="left:837px;top:994px;width:1px;height:21px;background:#c6c6c6"></div>
<div class="tab" style="left:840px;width:39px;background:#ff0000;color:#fff">Y4</div>
<div style="left:881px;top:994px;width:1px;height:21px;background:#c6c6c6"></div>
<div class="tab" style="left:884px;width:39px;background:#ffc000;color:#000">FK</div>
<div style="left:925px;top:994px;width:1px;height:21px;background:#c6c6c6"></div>
<div class="tab" style="left:928px;width:39px;background:#ffc000;color:#000">Y5</div>
<div style="left:969px;top:994px;width:1px;height:21px;background:#c6c6c6"></div>
<div class="tab" style="left:972px;width:39px;background:#ff0000;color:#fff">Y7</div>
<div style="left:1013px;top:994px;width:1px;height:21px;background:#c6c6c6"></div>
<div class="tab" style="left:1016px;width:39px;background:#ffc000;color:#000">dY</div>
<div style="left:1057px;top:994px;width:1px;height:21px;background:#c6c6c6"></div>
<div class="tab" style="left:1061px;width:41px;background:#ffc000;color:#000">УN</div>
<div style="left:1104px;top:994px;width:1px;height:21px;background:#c6c6c6"></div>
<div class="tab" style="left:1108px;width:81px;background:#00b050;color:#000">ЗПООН</div>
<div style="left:1191px;top:994px;width:1px;height:21px;background:#c6c6c6"></div>
<div class="tab" style="left:1194px;width:47px;background:#00b050;color:#000">WB</div>
<div style="left:1243px;top:994px;width:1px;height:21px;background:#c6c6c6"></div>
<div class="tab" style="left:1246px;width:52px;background:#ffc000;color:#000">66D</div>
<div style="left:1300px;top:994px;width:1px;height:21px;background:#c6c6c6"></div>
<div class="tab" style="left:1303px;width:62px;background:#92d050;color:#000">T66D</div>
<div style="left:1367px;top:994px;width:1px;height:21px;background:#c6c6c6"></div>
<div class="tab" style="left:1370px;width:52px;background:#ffc000;color:#000">65D</div>
<div style="left:1424px;top:994px;width:1px;height:21px;background:#c6c6c6"></div>
<div class="tab" style="left:1427px;width:51px;background:#ffc000;color:#000">68A</div>
<div style="left:1480px;top:994px;width:1px;height:21px;background:#c6c6c6"></div>
<div class="tab" style="left:1483px;width:50px;background:#ffc000;color:#000">68B</div>
<div style="left:1535px;top:994px;width:1px;height:21px;background:#c6c6c6"></div>
<div class="tab" style="left:1538px;width:52px;background:#ffc000;color:#000">68D</div>
<div style="left:1592px;top:994px;width:1px;height:21px;background:#c6c6c6"></div>
<div style="left:1593px;top:991px;width:66px;height:26px;background:linear-gradient(#fff 45%,#a9d9be);border-bottom:2px solid #217346;color:#217346;font-weight:bold;font-size:16.5px;line-height:21px;text-align:center">T68D</div>
<div style="left:1592px;top:991px;width:1px;height:25px;background:#ababab"></div>
<div style="left:1659px;top:991px;width:1px;height:25px;background:#ababab"></div>
<div style="left:1663px;top:993px;width:33px;height:23px;background:#ffc000;overflow:hidden;font-size:16.5px;line-height:19px;white-space:pre;padding-left:7px">Ур3</div>
<div style="left:1702px;top:993px;width:16px;height:20px;font-size:17px;line-height:19px;color:#3a3a3a;font-weight:bold;letter-spacing:1px">...</div>
<svg class="a" style="left:1727px;top:993px" width="24" height="24"><circle cx="12" cy="12" r="9.5" fill="#fff" stroke="#777" stroke-width="1.4"/><path d="M12 6.5V17.5M6.5 12H17.5" stroke="#777" stroke-width="1.5"/></svg>
<svg class="a" style="left:1765px;top:997px" width="4" height="16"><rect x="1" y="1" width="2" height="2" fill="#999"/><rect x="1" y="6" width="2" height="2" fill="#999"/><rect x="1" y="11" width="2" height="2" fill="#999"/></svg>
<div style="left:1786px;top:995px;width:18px;height:19px;background:#fff;border:1px solid #ababab"></div>
<svg class="a" style="left:1790px;top:999px" width="8" height="11"><path d="M7 0V11L1 5.5Z" fill="#555"/></svg>
<div style="left:1805px;top:995px;width:68px;height:19px;background:#f0f0f0"></div>
<div style="left:1824px;top:995px;width:36px;height:19px;background:#fff;border:1px solid #ababab"></div>
<div style="left:1874px;top:995px;width:19px;height:19px;background:#fff;border:1px solid #ababab"></div>
<svg class="a" style="left:1880px;top:999px" width="8" height="11"><path d="M1 0V11L7 5.5Z" fill="#555"/></svg>
<div style="left:0px;top:1019px;width:1920px;height:27px;background:#217346"></div>
<div style="left:7px;top:1019px;width:80px;height:27px;color:#fff;font-size:12.4px;line-height:27px;white-space:pre">ГОТОВО</div>
<svg class="a" style="left:77px;top:1022px" width="18" height="18"><rect x="2.6" y="3.6" width="13" height="12.6" fill="none" stroke="#fff" stroke-width="1.2"/><rect x="2.6" y="3.6" width="13" height="2.4" fill="#fff"/><path d="M5 8.5H14M5 11H14M5 13.5H14" stroke="#fff" stroke-width="1.2" stroke-dasharray="2 1.2"/><circle cx="4.3" cy="4.6" r="3.2" fill="#c9ddd1"/></svg>
<div style="left:1582px;top:1019px;width:41px;height:27px;background:#185c37"></div>
<svg class="a" style="left:1593px;top:1024px" width="18" height="16"><rect x="1" y="1" width="15" height="13" fill="none" stroke="#fff" stroke-width="1.3"/><path d="M1 5.5H16M1 9.5H16M6 1V14M11 1V14" stroke="#fff" stroke-width="1.1"/></svg>
<svg class="a" style="left:1635px;top:1024px" width="18" height="16"><rect x="1" y="1" width="15" height="13" fill="none" stroke="#fff" stroke-width="1.3"/><rect x="4.5" y="4" width="8" height="7.5" fill="none" stroke="#fff" stroke-width="1.1"/><path d="M6.5 6.5H10.5M6.5 9H10.5" stroke="#fff" stroke-width="1"/></svg>
<svg class="a" style="left:1676px;top:1024px" width="18" height="16"><rect x="1" y="1" width="15" height="13" fill="none" stroke="#fff" stroke-width="1.3"/><rect x="3" y="2.5" width="4.5" height="6.5" fill="#fff"/><rect x="9" y="2.5" width="5" height="4" fill="#fff"/></svg>
<div style="left:1711px;top:1032px;width:10px;height:2px;background:#fff"></div>
<div style="left:1724px;top:1032px;width:124px;height:1px;background:#fff"></div>
<div style="left:1769px;top:1024px;width:5px;height:17px;background:#fff"></div>
<div style="left:1786px;top:1029px;width:1px;height:7px;background:#fff"></div>
<div style="left:1851px;top:1032px;width:12px;height:2px;background:#fff"></div>
<div style="left:1856px;top:1027px;width:2px;height:12px;background:#fff"></div>
<div style="left:1874px;top:1019px;width:40px;height:27px;color:#fff;font-size:13px;line-height:28px;white-space:pre;text-align:right;width:30px">80%</div>
<div style="left:0px;top:0px;width:1920px;height:118px;background:#fff"></div>
<svg class="a" style="left:9px;top:2px" width="22" height="22" viewBox="0 0 22 22"><rect x="10" y="3.5" width="11" height="15" fill="#fff" stroke="#217346" stroke-width="1"/><g fill="#217346"><rect x="13" y="5" width="3" height="1.8"/><rect x="17" y="5" width="3" height="1.8"/><rect x="13" y="7.8" width="3" height="1.8"/><rect x="17" y="7.8" width="3" height="1.8"/><rect x="13" y="10.6" width="3" height="1.8"/><rect x="17" y="10.6" width="3" height="1.8"/><rect x="13" y="13.4" width="3" height="1.8"/><rect x="17" y="13.4" width="3" height="1.8"/><rect x="13" y="16.2" width="3" height="1.3"/><rect x="17" y="16.2" width="3" height="1.3"/></g><path d="M1 3L13 1V21L1 19Z" fill="#217346"/><text x="3.4" y="15" font-family="Liberation Sans,sans-serif" font-size="10.5" font-weight="bold" fill="#fff">X</text></svg>
<svg class="a" style="left:45px;top:5px" width="17" height="17" viewBox="0 0 17 17"><path d="M.5 1.5Q.5 .5 1.5 .5H15Q16 .5 16 1.5V15Q16 16 15 16H1.5Q.5 16 .5 15Z" fill="#8e4fb4"/><rect x="3" y="2" width="10.5" height="6.5" fill="#fff"/><rect x="4.5" y="11" width="7.5" height="5" fill="#fff"/><rect x="6" y="12.2" width="2.6" height="3.8" fill="#8e4fb4"/></svg>
<svg class="a" style="left:76px;top:5px" width="32" height="18" viewBox="0 0 32 18"><path d="M8 1.5L2 7L9.5 9.5L8.3 6.6Q16.5 6 16.3 11.5Q16 14.5 12.3 15.3L12.8 17Q19.3 15.5 19 10.5Q18.5 3.5 7.6 4.2Z" fill="#3c78b8" stroke="#3c78b8" stroke-width=".8" stroke-linejoin="round"/><path d="M25 6.5H31L28 9.8Z" fill="#555"/></svg>
<svg class="a" style="left:121px;top:5px" width="32" height="18" viewBox="0 0 32 18"><path d="M12 1.5L18 7L10.5 9.5L11.7 6.6Q3.5 6 3.7 11.5Q4 14.5 7.7 15.3L7.2 17Q.7 15.5 1 10.5Q1.5 3.5 12.4 4.2Z" fill="#b4b4b4" stroke="#b4b4b4" stroke-width=".8" stroke-linejoin="round"/><path d="M25 6.5H31L28 9.8Z" fill="#c8c8c8"/></svg>
<svg class="a" style="left:170px;top:7px" width="14" height="12" viewBox="0 0 14 12"><path d="M6.5 1L1.5 6L6.5 11M2 6H13" fill="none" stroke="#3c78b8" stroke-width="2"/></svg>
<svg class="a" style="left:198px;top:2px" width="22" height="22" viewBox="0 0 22 22"><text x="4.2" y="15" font-family="Liberation Sans,sans-serif" font-size="17.5" fill="#444">A</text><rect x="1" y="16.5" width="20" height="5" fill="#3c78b8"/></svg>
<svg class="a" style="left:233px;top:6px" width="18" height="14" viewBox="0 0 18 14"><path d="M0 2.5H17M3 5.5H14M0 8.5H17M3 11.5H14" stroke="#666" stroke-width="1"/></svg>
<div style="left:266px;top:2px;width:24px;height:24px;font-size:19.5px;line-height:24px;color:#555;white-space:pre">%</div>
<svg class="a" style="left:296px;top:2px" width="24" height="24" viewBox="0 0 24 24"><text x="1" y="16" font-family="Liberation Sans,sans-serif" font-size="18.5" font-weight="bold" fill="#3c78b8">A</text><path d="M13 15.5L20 7.5L21 9.5L15.5 17.5Z" fill="#777"/><path d="M9 20Q9.5 16 13.5 16.2Q16 17 14.5 19.5Q12.5 21.5 8 20.8Z" fill="#3c78b8"/></svg>
<svg class="a" style="left:330px;top:3px" width="20" height="20" viewBox="0 0 20 20"><path d="M4 2.5H9.5V5M4 18H9.5V15.5" fill="none" stroke="#666" stroke-width="1.1"/><rect x="11" y="7.5" width="6.5" height="5" fill="#bdd2ea" stroke="#8aa8cc" stroke-width=".8"/><path d="M5.5 7L2.5 10L5.5 13M3 10H9" fill="none" stroke="#3c78b8" stroke-width="1.7"/></svg>
<svg class="a" style="left:363px;top:3px" width="22" height="20" viewBox="0 0 22 20"><path d="M2.5 4V8.5H5V4M16 4V8.5H18.5V4" fill="none" stroke="#666" stroke-width="1.1"/><rect x="8.5" y="10.5" width="5" height="6.5" fill="#bdd2ea" stroke="#666" stroke-width=".9"/><path d="M8 6.5L11 3.5L14 6.5M11 4V9.5" fill="none" stroke="#3c78b8" stroke-width="1.7"/></svg>
<svg class="a" style="left:396px;top:2px" width="22" height="22" viewBox="0 0 22 22"><rect x="2.5" y="2.5" width="10" height="3" fill="none" stroke="#666" stroke-width="1"/><path d="M7.5 2.5V5.5" stroke="#666"/><rect x="9" y="9" width="9.5" height="3" fill="#bdd2ea" stroke="#666" stroke-width="1"/><path d="M13.7 9V12" stroke="#666"/><rect x="2.5" y="15" width="10" height="5.5" fill="none" stroke="#666" stroke-width="1"/><path d="M7.5 15V20.5M2.5 17.7H12.5" stroke="#666"/><path d="M5.5 7.5L2.5 10.5L5.5 13.5M3 10.5H8" fill="none" stroke="#3c78b8" stroke-width="1.7"/></svg>
<svg class="a" style="left:431px;top:2px" width="20" height="22" viewBox="0 0 20 22"><path d="M2 2V7H4.5M18 2V7H15.5" fill="none" stroke="#666" stroke-width="1.1"/><path d="M7 2H13V9L10 12L7 9Z" fill="#bdd2ea" stroke="#9ab4d4" stroke-width=".7"/><path d="M5 12.5L14.5 20M14.5 12.5L5 20" stroke="#d9532c" stroke-width="2"/></svg>
<svg class="a" style="left:462px;top:3px" width="28" height="20" viewBox="0 0 28 20"><path d="M2 4H7V6.5M2 17H7V14.5" fill="none" stroke="#666" stroke-width="1.1"/><path d="M1.5 8H8.5L11 10.5L8.5 13H1.5Z" fill="#bdd2ea"/><path d="M13 6L23 15M23 6L13 15" stroke="#d9532c" stroke-width="2"/></svg>
<svg class="a" style="left:496px;top:2px" width="28" height="22" viewBox="0 0 28 22"><rect x="1.5" y="3" width="9" height="3" fill="none" stroke="#666" stroke-width="1"/><rect x="5" y="8.5" width="6" height="3" fill="#bdd2ea" stroke="#666" stroke-width="1"/><rect x="1.5" y="14.5" width="10" height="5.5" fill="none" stroke="#666" stroke-width="1"/><path d="M6.5 14.5V20M1.5 17.2H11.5" stroke="#666"/><path d="M12.5 6.5L21.5 14.5M21.5 6.5L12.5 14.5" stroke="#d9532c" stroke-width="2"/></svg>
<svg class="a" style="left:531px;top:2px" width="20" height="22" viewBox="0 0 20 22"><text x="0" y="10" font-family="Liberation Sans,sans-serif" font-size="11" font-weight="bold" fill="#3c78b8">A</text><text x="0" y="19.5" font-family="Liberation Sans,sans-serif" font-size="11" font-weight="bold" fill="#8e4fb4">Я</text><path d="M13.5 2V19M10 15.5L13.5 19.5L17 15.5" fill="none" stroke="#666" stroke-width="1.2"/></svg>
<svg class="a" style="left:563px;top:2px" width="20" height="22" viewBox="0 0 20 22"><text x="0" y="10" font-family="Liberation Sans,sans-serif" font-size="11" font-weight="bold" fill="#8e4fb4">Я</text><text x="0" y="19.5" font-family="Liberation Sans,sans-serif" font-size="11" font-weight="bold" fill="#3c78b8">A</text><path d="M13.5 2V19M10 15.5L13.5 19.5L17 15.5" fill="none" stroke="#666" stroke-width="1.2"/></svg>
<svg class="a" style="left:595px;top:4px" width="32" height="18" viewBox="0 0 32 18"><path d="M3 1.5H6.5L7.5 6V16H1V8Z" fill="#555"/><path d="M12.5 1.5H16L18 8V16H11.5V6Z" fill="#555"/><rect x="7" y="6" width="5" height="5" fill="#555"/><rect x="2.2" y="9" width="4" height="6" fill="#fff" opacity=".85"/><rect x="12.8" y="9" width="4" height="6" fill="#fff" opacity=".85"/><path d="M24 7H30L27 10.3Z" fill="#444"/></svg>
<svg class="a" style="left:641px;top:3px" width="32" height="20" viewBox="0 0 32 20"><path d="M2 1.5H15V5H13.8Q13.5 3 11.5 3H5.5L10.5 9.5L5 16H12Q14 16 14.5 13.5H15.8L15 18.5H1.5V17.5L7.5 10L2 2.5Z" fill="#444"/><path d="M24 8H30L27 11.3Z" fill="#777"/></svg>
<div style="left:686px;top:0px;width:22px;height:26px;font-family:'Liberation Serif',serif;font-style:italic;font-size:25px;line-height:24px;color:#b4b4b4">π</div>
<div style="left:719px;top:0px;width:22px;height:26px;font-family:'Liberation Serif',serif;font-weight:bold;font-size:23px;line-height:27px;color:#3c78b8">Ω</div>
<svg class="a" style="left:751px;top:3px" width="22" height="22" viewBox="0 0 22 22"><circle cx="9" cy="8.5" r="7" fill="none" stroke="#666" stroke-width="1.1"/><path d="M2 8.5H16M9 1.5V15.5M3.5 4.5H14.5M3.5 12.5H10" stroke="#666" stroke-width="1"/><ellipse cx="9" cy="8.5" rx="3.3" ry="7" fill="none" stroke="#666" stroke-width="1"/><rect x="5" y="14" width="8" height="5" rx="2.5" fill="#fff" stroke="#3c78b8" stroke-width="1.6"/><rect x="11" y="14" width="8" height="5" rx="2.5" fill="none" stroke="#3c78b8" stroke-width="1.6"/></svg>
<svg class="a" style="left:784px;top:3px" width="22" height="20" viewBox="0 0 22 20"><rect x="1" y="8" width="4" height="10" fill="#3c78b8"/><rect x="6" y="1.5" width="5" height="16.5" fill="#ebc17a"/><rect x="12" y="4" width="5" height="2" fill="#666"/><text x="11.5" y="19.5" font-family="Liberation Sans,sans-serif" font-size="14" font-weight="bold" fill="#3c78b8">?</text></svg>
<svg class="a" style="left:818px;top:3px" width="32" height="20" viewBox="0 0 32 20"><rect x="1" y="8" width="4" height="10" fill="#3c78b8"/><rect x="7" y="1.5" width="5" height="6" fill="#ebc17a"/><rect x="13" y="4" width="5" height="2.5" fill="#666"/><rect x="7.5" y="8.5" width="11" height="10.5" fill="#fff" stroke="#666" stroke-width="1"/><path d="M10 11.5H11M12.5 11.5H16.5M10 16H14V13M12.8 14.2L14 13L15.2 14.2" stroke="#3c78b8" stroke-width="1" fill="none"/><path d="M24 8H30L27 11.3Z" fill="#666"/></svg>
<svg class="a" style="left:854px;top:2px" width="34" height="22" viewBox="0 0 34 22"><path d="M3 19L7 2.5L13.5 16L19.5 8" fill="none" stroke="#666" stroke-width="1"/><path d="M2.5 10L8 19.5L14.5 4L20 18.5" fill="none" stroke="#3c78b8" stroke-width="1"/><g fill="#777"><circle cx="3" cy="19" r="1.4"/><circle cx="7" cy="2.5" r="1.4"/><circle cx="13.5" cy="16" r="1.4"/><circle cx="19.5" cy="8" r="1.4"/></g><g fill="#3c78b8"><circle cx="2.5" cy="10" r="1.4"/><circle cx="8" cy="19.5" r="1.4"/><circle cx="14.5" cy="4" r="1.4"/><circle cx="20" cy="18.5" r="1.4"/></g><path d="M26 9H32L29 12.3Z" fill="#444"/></svg>
<svg class="a" style="left:893px;top:3px" width="32" height="20" viewBox="0 0 32 20"><rect x="1" y="9" width="4.5" height="10" fill="#3c78b8"/><rect x="7" y="2" width="5" height="17" fill="#ebc17a"/><rect x="13.5" y="6" width="4.5" height="13" fill="#777"/><path d="M24 8H30L27 11.3Z" fill="#444"/></svg>
<svg class="a" style="left:931px;top:3px" width="32" height="20" viewBox="0 0 32 20"><path d="M1 15L5 2L10 9Z" fill="#ebc17a"/><path d="M15 5.5Q17.5 3 17.5 7Q19.5 11 18.5 16L15 9Z" fill="#777"/><path d="M1 19V14L11.5 6L19 19Z" fill="#3c78b8"/><path d="M24 8H30L27 11.3Z" fill="#444"/></svg>
<svg class="a" style="left:969px;top:2px" width="36" height="22" viewBox="0 0 36 22"><path d="M1.5 1.5V19.5H19" fill="none" stroke="#666" stroke-width="1"/><g fill="#ebc17a"><rect x="4.5" y="6.5" width="2.6" height="2.6"/><rect x="9.5" y="11" width="2.6" height="2.6"/><rect x="14.5" y="15" width="2.6" height="2.6"/></g><g fill="#3c78b8"><rect x="12.5" y="5.5" width="2.6" height="2.6"/><rect x="4" y="12.5" width="2.6" height="2.6"/><rect x="16.5" y="10.5" width="2.6" height="2.6"/></g><path d="M27 9H33L30 12.3Z" fill="#444"/></svg>
<svg class="a" style="left:1014px;top:9px" width="8" height="10" viewBox="0 0 8 10"><path d="M.5 1.5H6.5" stroke="#777" stroke-width="1"/><path d="M.5 4H6.5L3.5 7.5Z" fill="#777"/></svg>
<div style="left:1100px;top:0px;width:576px;height:29px;font-size:14.6px;line-height:31px;color:#444;text-align:center;white-space:pre">Gross Average Monthly Wages-c0000775-NEW.xlsm - Excel</div>
<div style="left:1763px;top:0px;width:14px;height:29px;font-size:15px;line-height:27px;color:#555;font-weight:bold;text-align:center">?</div>
<svg class="a" style="left:1796px;top:7px" width="17" height="13" viewBox="0 0 17 13"><rect x=".5" y=".5" width="15" height="11" fill="none" stroke="#666" stroke-width="1"/><path d="M.5 2H15.5" stroke="#666"/><path d="M8 11V4.5M4.8 7.8L8 4.5L11.2 7.8" fill="none" stroke="#666" stroke-width="1.6"/></svg>
<div style="left:1831px;top:15px;width:12px;height:2px;background:#555"></div>
<svg class="a" style="left:1863px;top:7px" width="16" height="14" viewBox="0 0 16 14"><rect x="3.5" y="1" width="9" height="7" fill="none" stroke="#666" stroke-width="1"/><path d="M3.5 2.2H12.5" stroke="#666" stroke-width="1.4"/><rect x="1" y="4.5" width="9" height="7" fill="#fff" stroke="#666" stroke-width="1"/><path d="M1 5.7H10" stroke="#666" stroke-width="1.4"/></svg>
<svg class="a" style="left:1896px;top:7px" width="14" height="13" viewBox="0 0 14 13"><path d="M1.5 1L12.5 12M12.5 1L1.5 12" stroke="#444" stroke-width="1.9"/></svg>
<div style="left:0px;top:29px;width:73px;height:30px;background:#217346;color:#fff;font-size:15px;line-height:30px;text-align:center;white-space:pre">ФАЙЛ</div>
<div class="rb" style="left:90px">ГЛАВНАЯ</div>
<div class="rb" style="left:185px">ВСТАВКА</div>
<div class="rb" style="left:278px">РАЗМЕТКА СТРАНИЦЫ</div>
<div class="rb" style="left:465px">ФОРМУЛЫ</div>
<div class="rb" style="left:568px">ДАННЫЕ</div>
<div class="rb" style="left:659px">РЕЦЕНЗИРОВАНИЕ</div>
<div class="rb" style="left:821px">ВИД</div>
<div class="rb" style="left:880px">РАЗРАБОТЧИК</div>
<div class="rb" style="left:1850px;font-size:15px">Вход</div>
<div style="left:1890px;top:29px;width:30px;height:30px;background:#ababab;overflow:hidden"><svg class="a" style="left:0;top:0" width="30" height="30"><ellipse cx="14.5" cy="10.5" rx="5.8" ry="6.6" fill="#fff"/><path d="M3.5 30V23Q3.5 17.5 10 17.5Q14.5 20.5 19 17.5Q26 17.5 26 23V30Z" fill="#fff"/></svg></div>
<div style="left:5px;top:76px;width:128px;height:32px;border:1px solid #c6c6c6;background:#fff;font-family:'Liberation Serif',serif;font-size:19px;line-height:27px;padding-left:6px;color:#333;white-space:pre">AB6</div>
<svg class="a" style="left:116px;top:89px" width="9" height="6" viewBox="0 0 9 6"><path d="M.5 .5H8.5L4.5 5Z" fill="#666"/></svg>
<svg class="a" style="left:149px;top:85px" width="4" height="14" viewBox="0 0 4 14"><rect x="1" y="1" width="1.5" height="1.5" fill="#999"/><rect x="1" y="5.5" width="1.5" height="1.5" fill="#999"/><rect x="1" y="10" width="1.5" height="1.5" fill="#999"/></svg>
<div style="left:170px;top:76px;width:137px;height:32px;border:1px solid #c6c6c6;background:#fff"></div>
<svg class="a" style="left:185px;top:86px" width="14" height="13" viewBox="0 0 14 13"><path d="M1 1L13 12M13 1L1 12" stroke="#c6c6c6" stroke-width="1.8"/></svg>
<svg class="a" style="left:229px;top:85px" width="18" height="14" viewBox="0 0 18 14"><path d="M1.5 8L6.5 12.5L16.5 1.5" fill="none" stroke="#c6c6c6" stroke-width="2.2"/></svg>
<div style="left:273px;top:77px;width:26px;height:28px;font-family:'Liberation Serif',serif;font-style:italic;font-weight:bold;font-size:21px;line-height:28px;color:#777;white-space:pre;letter-spacing:-1.5px">f<span style="font-size:15px">x</span></div>
<div style="left:310px;top:76px;width:1605px;height:32px;border:1px solid #c6c6c6;background:#fff;font-family:'Liberation Serif',serif;font-size:19.7px;line-height:30px;padding-left:16px;color:#222;white-space:pre;overflow:hidden">РИСК АНАЛИЗ ДОРОШКО-САМАРИНА = ЭФФЕКТИВНОСТЬ - КОРРУПЦИЯ - ЗАКОНОДАТЕЛЬСТВО</div>
<svg class="a" style="left:1899px;top:87px" width="12" height="9" viewBox="0 0 12 9"><path d="M1.5 2L5.8 6.3L10 2" fill="none" stroke="#555" stroke-width="2.6"/></svg>
<div style="left:0px;top:1046px;width:1920px;height:34px;background:linear-gradient(90deg,#8ea4bf 0,#8ea4bf 66px,#b7d0eb 74px,#b3cdea 1583px,#8da5c1 1622px,#8da5c1 1920px)"></div>
<div style="left:0px;top:1046px;width:1920px;height:1px;background:rgba(70,90,115,.55)"></div>
<div style="left:0px;top:1047px;width:1920px;height:1px;background:rgba(255,255,255,.45)"></div>
<svg class="a" style="left:12px;top:1038px" width="42" height="42" viewBox="0 0 42 42"><defs><radialGradient id="og" cx="50%" cy="95%" r="75%"><stop offset="0" stop-color="#19e3ff"/><stop offset=".45" stop-color="#0b7fc4"/><stop offset="1" stop-color="#0a3d78"/></radialGradient><linearGradient id="oh" x1="0" y1="0" x2="0" y2="1"><stop offset="0" stop-color="#fff" stop-opacity=".75"/><stop offset="1" stop-color="#fff" stop-opacity=".12"/></linearGradient></defs><circle cx="21" cy="21" r="20.3" fill="url(#og)" stroke="#0d3f73" stroke-width="1.4"/><path d="M2.5 20A18.5 18.5 0 0 1 39.5 20Q21 27 2.5 20Z" fill="url(#oh)"/><path d="M11.5 9.5Q16 7 21.5 9.5L20 19Q15 17 9.8 19.5Z" fill="#f2642a"/><path d="M23 10.5Q28.5 13.5 34 11L31.5 21Q26.5 23 21.5 20Z" fill="#8cc342"/><path d="M9.3 21.5Q14.5 19 19.5 21.5L17.5 31Q12.5 29 7.5 31Z" fill="#2f9be0"/><path d="M21 22.5Q26 25 31 23L28.5 32.5Q24 35.5 18.8 32.5Z" fill="#fdb813"/></svg>
<div style="left:72px;top:1047px;width:46px;height:33px;background:linear-gradient(#d3e2f3,#c0d6ee 48%,#b1cbe8 52%,#bcd4ee);border:1px solid #55667d;border-bottom:0;border-radius:3px 3px 0 0;box-shadow:inset 0 0 0 1px rgba(255,255,255,.65)"></div>
<div style="left:122px;top:1047px;width:46px;height:33px;background:linear-gradient(#d3e2f3,#c0d6ee 48%,#b1cbe8 52%,#bcd4ee);border:1px solid #55667d;border-bottom:0;border-radius:3px 3px 0 0;box-shadow:inset 0 0 0 1px rgba(255,255,255,.65)"></div>
<div style="left:172px;top:1047px;width:46px;height:33px;background:linear-gradient(#d3e2f3,#c0d6ee 48%,#b1cbe8 52%,#bcd4ee);border:1px solid #55667d;border-bottom:0;border-radius:3px 3px 0 0;box-shadow:inset 0 0 0 1px rgba(255,255,255,.65)"></div>
<div style="left:322px;top:1047px;width:46px;height:33px;background:linear-gradient(#d3e2f3,#c0d6ee 48%,#b1cbe8 52%,#bcd4ee);border:1px solid #55667d;border-bottom:0;border-radius:3px 3px 0 0;box-shadow:inset 0 0 0 1px rgba(255,255,255,.65)"></div>
<div style="left:822px;top:1047px;width:46px;height:33px;background:linear-gradient(#d3e2f3,#c0d6ee 48%,#b1cbe8 52%,#bcd4ee);border:1px solid #55667d;border-bottom:0;border-radius:3px 3px 0 0;box-shadow:inset 0 0 0 1px rgba(255,255,255,.65)"></div>
<div style="left:872px;top:1047px;width:46px;height:33px;background:linear-gradient(#d3e2f3,#c0d6ee 48%,#b1cbe8 52%,#bcd4ee);border:1px solid #55667d;border-bottom:0;border-radius:3px 3px 0 0;box-shadow:inset 0 0 0 1px rgba(255,255,255,.65)"></div>
<div style="left:922px;top:1047px;width:46px;height:33px;background:linear-gradient(#d3e2f3,#c0d6ee 48%,#b1cbe8 52%,#bcd4ee);border:1px solid #55667d;border-bottom:0;border-radius:3px 3px 0 0;box-shadow:inset 0 0 0 1px rgba(255,255,255,.65)"></div>
<div style="left:977px;top:1047px;width:42px;height:33px;background:linear-gradient(#d3e2f3,#c0d6ee 48%,#b1cbe8 52%,#bcd4ee);border:1px solid #55667d;border-bottom:0;border-radius:3px 3px 0 0;box-shadow:inset 0 0 0 1px rgba(255,255,255,.65)"></div>
<div style="left:972px;top:1047px;width:42px;height:33px;background:linear-gradient(#e9f1fa,#d3e3f5 48%,#c3d9f0 52%,#cfe1f4);border:1px solid #55667d;border-bottom:0;border-radius:3px 3px 0 0;box-shadow:inset 0 0 0 1px rgba(255,255,255,.65)"></div>
<svg class="a" style="left:84px;top:1051px" width="24" height="24" viewBox="0 0 24 24"><path d="M1.5 5.5H9L11 7.5H21.5V21H1.5Z" fill="#f4d877" stroke="#d9b64a" stroke-width=".8"/><rect x="3" y="4" width="3" height="3" fill="#2bb24c"/><rect x="9" y="5.5" width="3" height="2.5" fill="#e23b2e"/><rect x="14" y="6" width="3" height="2.5" fill="#2a8fe0"/><path d="M1.5 10H21.5V21H1.5Z" fill="#fae79a"/><path d="M4.5 22V16Q4.5 14.5 6 14.5H17Q18.5 14.5 18.5 16V22H15.5V18H7.5V22Z" fill="#7cc4ea" stroke="#5aa9d6" stroke-width=".6"/></svg>
<svg class="a" style="left:135px;top:1052px" width="22" height="22" viewBox="0 0 22 22"><circle cx="11" cy="11" r="10" fill="#fff"/><path d="M11 1A10 10 0 0 1 19.66 6H11A5 5 0 0 0 6.67 8.5L2.34 6A10 10 0 0 1 11 1Z" fill="#ea4335"/><path d="M19.66 6A10 10 0 0 1 11 21L15.33 13.5A5 5 0 0 0 15.33 8.5L16 6Z" fill="#fbbc05"/><path d="M2.34 6L6.67 13.5A5 5 0 0 0 11 16L15.33 13.5L11 21A10 10 0 0 1 2.34 6Z" fill="#34a853"/><circle cx="11" cy="11" r="4.6" fill="#fff"/><circle cx="11" cy="11" r="3.7" fill="#4285f4"/></svg>
<svg class="a" style="left:183px;top:1051px" width="24" height="24" viewBox="0 0 24 24"><ellipse cx="9.5" cy="8.5" rx="7.5" ry="6.5" fill="#fff" stroke="#e23b3b" stroke-width="1.3"/><path d="M6 4L14 17M13 4L9 12" stroke="#888" stroke-width="1.6"/><ellipse cx="13.5" cy="20" rx="2.3" ry="3" fill="none" stroke="#2a8fd6" stroke-width="1.6" transform="rotate(-25 13.5 20)"/><ellipse cx="18.5" cy="16.5" rx="2.3" ry="3" fill="none" stroke="#2a8fd6" stroke-width="1.6" transform="rotate(-60 18.5 16.5)"/></svg>
<svg class="a" style="left:234px;top:1052px" width="22" height="20" viewBox="0 0 22 20"><rect x=".5" y="1" width="20" height="17" fill="#000"/><rect x=".5" y="1" width="20" height="2.5" fill="#777"/><text x="2" y="10" font-family="Liberation Mono,monospace" font-size="6" fill="#ddd" font-weight="bold">C:\_</text></svg>
<svg class="a" style="left:283px;top:1051px" width="24" height="24" viewBox="0 0 24 24"><path d="M3 2L18 3.5V16L4.5 14.5Z" fill="#2b55c8" stroke="#c8d4e8" stroke-width="1.6"/><path d="M8 12L13 6" stroke="#fff" stroke-width="1.3"/><path d="M9 17.5H14L15 21H8Z" fill="#b9c2cf"/><ellipse cx="11.5" cy="21.5" rx="6" ry="1.7" fill="#9aa6b6"/></svg>
<svg class="a" style="left:333px;top:1050px" width="26" height="26" viewBox="0 0 26 26"><path d="M8 2L23 3V13L9 12Z" fill="#1e64c8" stroke="#cfd9ea" stroke-width="1.2"/><path d="M3 6L17 7.5V18L4.5 16.5Z" fill="#2a7be0" stroke="#dfe7f3" stroke-width="1.4"/><path d="M5 10H15M5 12.5H15" stroke="#fff" stroke-width="1.2" stroke-dasharray="1.5 1"/><path d="M8.5 19H13L14 22H7.5Z" fill="#b9c2cf"/><ellipse cx="10.8" cy="22.6" rx="6" ry="1.6" fill="#98a4b4"/></svg>
<svg class="a" style="left:384px;top:1051px" width="24" height="24" viewBox="0 0 24 24"><path d="M7 3L21 4V15L8 14Z" fill="#39414b" stroke="#aeb7c3" stroke-width="1.1"/><path d="M2.5 6L14 7V17L3.5 16Z" fill="#0c2b12" stroke="#b8c1cd" stroke-width="1.3"/><path d="M5 9H11M5 11.5H9M7 14H12" stroke="#36d24a" stroke-width="1.3"/><path d="M9 17H15L17 21H8Z" fill="#c2c9d3"/></svg>
<svg class="a" style="left:436px;top:1051px" width="18" height="24" viewBox="0 0 18 24"><rect x="1.5" y="1.5" width="14.5" height="21" rx="1.2" fill="#eaf2fb" stroke="#8fb0d6" stroke-width="1"/><rect x="3.2" y="3.2" width="11" height="6" fill="#cfe3f7" stroke="#9fbfe3" stroke-width=".6"/><circle cx="11.5" cy="6" r="1.4" fill="#e8a33a"/><g fill="#9fc0e6"><rect x="3.3" y="11" width="2.6" height="2.2"/><rect x="7.3" y="11" width="2.6" height="2.2"/><rect x="11.3" y="11" width="2.6" height="2.2"/><rect x="3.3" y="14.6" width="2.6" height="2.2"/><rect x="7.3" y="14.6" width="2.6" height="2.2"/><rect x="11.3" y="14.6" width="2.6" height="2.2"/><rect x="3.3" y="18.2" width="2.6" height="2.2"/><rect x="7.3" y="18.2" width="2.6" height="2.2"/><rect x="11.3" y="18.2" width="2.6" height="2.2"/></g></svg>
<svg class="a" style="left:484px;top:1051px" width="22" height="22" viewBox="0 0 22 22"><path d="M15.5 1L21 3.5V18.5L15.5 21L6 12.5L2.5 15.2L1 14.2V7.8L2.5 6.8L6 9.5Z" fill="#1f9cf0"/><path d="M15.5 6.3V15.7L9.3 11Z" fill="#b3cdea"/><path d="M15.5 1L21 3.5V18.5L15.5 21Z" fill="#0d7ad0"/></svg>
<svg class="a" style="left:534px;top:1051px" width="24" height="24" viewBox="0 0 24 24"><path d="M21 6.5A9.5 9.5 0 1 0 21 17.5L17 15.5A5.2 5.2 0 1 1 17 8.5Z" fill="#e1452b"/><path d="M13 2L16 3.5L10 14L7.5 12.5Z" fill="#2f7fd6"/><path d="M6 12L11.5 15.5L8 21.5L1.5 18Z" fill="#f2c58a" stroke="#d29a55" stroke-width=".6"/></svg>
<svg class="a" style="left:585px;top:1051px" width="20" height="24" viewBox="0 0 20 24"><ellipse cx="10" cy="7" rx="6.5" ry="6" fill="#1a1a1a"/><path d="M4.5 6Q10 3.5 15.5 6V8.5Q10 7 4.5 8.5Z" fill="#f1d2b0"/><circle cx="7.7" cy="6.8" r=".8" fill="#000"/><circle cx="12.3" cy="6.8" r=".8" fill="#000"/><path d="M4.5 12H15.5L17 18L13.5 23H11L10 19L9 23H6.5L3 18Z" fill="#1a1a1a"/><path d="M2 13.5L8 16.5M18 13L12 16.5" stroke="#1a1a1a" stroke-width="2.4"/></svg>
<div style="left:635px;top:1053px;width:20px;height:20px;background:#b8090f;color:#fff;font-weight:bold;font-size:14.5px;line-height:21px;text-align:center;letter-spacing:-1px;overflow:hidden">64</div>
<svg class="a" style="left:684px;top:1050px" width="24" height="24" viewBox="0 0 24 24"><path d="M3 2.5H14.5L18 6V21.5H3Z" fill="#f5f5ee" stroke="#b7b7a8" stroke-width=".9"/><path d="M3.5 13H17.5V21H3.5Z" fill="#8fd436"/><path d="M3.5 17H17.5V21H3.5Z" fill="#5cb61e"/><path d="M6 6V12M8 8V12M10 9.5V12M12 9V12" stroke="#222" stroke-width="1.1"/><path d="M19 1.5L21 3L12.5 17L10.5 18L10.8 15.8Z" fill="#f1c232" stroke="#b58a14" stroke-width=".6"/><path d="M19 1.5L21 3L20.2 4.2L18.3 2.8Z" fill="#e06666"/></svg>
<svg class="a" style="left:735px;top:1051px" width="22" height="22" viewBox="0 0 22 22"><rect x=".5" y=".5" width="20" height="20" rx="3.5" fill="#0b0b0b"/><path d="M3.5 7.5Q3.5 6 5 6H13Q14.5 6 14.5 7.5V8.5L18 6.5V14.5L14.5 12.5V13.5Q14.5 15 13 15H5Q3.5 15 3.5 13.5Z" fill="#e8242c" stroke="#fff" stroke-width=".9"/><circle cx="8" cy="10.5" r="2.3" fill="none" stroke="#fff" stroke-width="1.1"/><path d="M10.3 10.5H13" stroke="#fff" stroke-width="1.1"/></svg>
<svg class="a" style="left:784px;top:1050px" width="24" height="24" viewBox="0 0 24 24"><circle cx="11" cy="12" r="10.2" fill="#090909" stroke="#1aa3ff" stroke-width="1.8"/><path d="M15 8.5A5 5 0 1 0 15 15.5" fill="none" stroke="#1aa3ff" stroke-width="2.6" transform="skewX(-10) translate(2 0)"/></svg>
<svg class="a" style="left:834px;top:1050px" width="24" height="24" viewBox="0 0 24 24"><path d="M3 2.5H14.5L18 6V21.5H3Z" fill="#f5f5ee" stroke="#b7b7a8" stroke-width=".9"/><path d="M3.5 13H17.5V21H3.5Z" fill="#8fd436"/><path d="M3.5 17H17.5V21H3.5Z" fill="#5cb61e"/><path d="M6 6V12M8 8V12M10 9.5V12M12 9V12" stroke="#222" stroke-width="1.1"/><path d="M19 1.5L21 3L12.5 17L10.5 18L10.8 15.8Z" fill="#f1c232" stroke="#b58a14" stroke-width=".6"/><path d="M19 1.5L21 3L20.2 4.2L18.3 2.8Z" fill="#e06666"/></svg>
<svg class="a" style="left:885px;top:1051px" width="22" height="22" viewBox="0 0 22 22"><rect x=".5" y=".5" width="20" height="20" rx="3.5" fill="#0b0b0b"/><path d="M3.5 7.5Q3.5 6 5 6H13Q14.5 6 14.5 7.5V8.5L18 6.5V14.5L14.5 12.5V13.5Q14.5 15 13 15H5Q3.5 15 3.5 13.5Z" fill="#e8242c" stroke="#fff" stroke-width=".9"/><circle cx="8" cy="10.5" r="2.3" fill="none" stroke="#fff" stroke-width="1.1"/><path d="M10.3 10.5H13" stroke="#fff" stroke-width="1.1"/></svg>
<svg class="a" style="left:934px;top:1051px" width="24" height="22" viewBox="0 0 24 22"><rect x="9" y="2.5" width="12" height="17" fill="#fff" stroke="#2b579a" stroke-width="1"/><path d="M12 6H19M12 8.5H19M12 11H19M12 13.5H19M12 16H19" stroke="#2b579a" stroke-width="1"/><path d="M1 2.5L13 .5V21.5L1 19.5Z" fill="#2b579a"/><text x="2.6" y="15" font-family="Liberation Sans,sans-serif" font-size="10.5" font-weight="bold" fill="#fff">W</text></svg>
<svg class="a" style="left:983px;top:1051px" width="24" height="22" viewBox="0 0 24 22"><rect x="9" y="2.5" width="12" height="17" fill="#fff" stroke="#217346" stroke-width="1"/><path d="M12 6H19M12 8.5H19M12 11H19M12 13.5H19M12 16H19M15.5 3V19" stroke="#217346" stroke-width="1.1"/><path d="M1 2.5L13 .5V21.5L1 19.5Z" fill="#217346"/><text x="3.2" y="15" font-family="Liberation Sans,sans-serif" font-size="10.5" font-weight="bold" fill="#fff">X</text></svg>
<div style="left:1628px;top:1053px;width:30px;height:18px;color:#edf2f8;font-size:13px;line-height:18px;white-space:pre">RU</div>
<svg class="a" style="left:1666px;top:1055px" width="22" height="18" viewBox="0 0 22 18"><rect x="1" y="2" width="15" height="13" rx="3" fill="#e0243a" stroke="#fff" stroke-width="1"/><path d="M16 6.5L20 4.5V12.5L16 10.5Z" fill="#e0243a" stroke="#fff" stroke-width=".8"/><circle cx="6.5" cy="8.5" r="2" fill="none" stroke="#fff" stroke-width="1"/><path d="M8.5 8.5H12" stroke="#fff" stroke-width="1"/></svg>
<svg class="a" style="left:1695px;top:1053px" width="22" height="22" viewBox="0 0 22 22"><circle cx="11" cy="11" r="10" fill="#f47b20"/><path d="M5 16L10 5.5M7.5 17L14.5 6.5M10.5 17.5L17.5 10M5 16.5Q11 15 16.5 17" stroke="#fff" stroke-width="1.7" fill="none" stroke-linecap="round"/></svg>
<svg class="a" style="left:1726px;top:1053px" width="22" height="24" viewBox="0 0 22 24"><path d="M3 2V22" stroke="#fff" stroke-width="1.6"/><path d="M4 3Q8 1 11 3.5T18 4V12Q14 13.5 11 11.5T4 11.5Z" fill="#fff" stroke="#5d6e84" stroke-width=".7"/><circle cx="15" cy="16.5" r="4.6" fill="#d81e1e" stroke="#fff" stroke-width=".8"/><path d="M13 14.5L17 18.5M17 14.5L13 18.5" stroke="#fff" stroke-width="1.4"/></svg>
<svg class="a" style="left:1756px;top:1053px" width="22" height="24" viewBox="0 0 22 24"><rect x="1.5" y="4" width="9.5" height="17" rx="1" fill="#e9eef4" stroke="#3b4656" stroke-width="1.3"/><rect x="4" y="2" width="4.5" height="2.5" fill="#3b4656"/><rect x="3.3" y="11" width="6" height="8.5" fill="#8e9aa9"/><path d="M13 3V8M18 3V8" stroke="#3b4656" stroke-width="1.6"/><path d="M11.5 8H19.5V12Q19.5 14 17.5 14H13.5Q11.5 14 11.5 12Z" fill="#fff" stroke="#3b4656" stroke-width="1.1"/><path d="M15.5 14V22" stroke="#fff" stroke-width="2.2"/></svg>
<svg class="a" style="left:1786px;top:1053px" width="24" height="24" viewBox="0 0 24 24"><rect x="7" y="6" width="14.5" height="11" fill="#aeb9c6" stroke="#2f3946" stroke-width="1.3"/><rect x="9" y="8" width="10.5" height="7" fill="#8d9bab"/><path d="M10.5 20.5H18.5M14.5 17V20.5" stroke="#2f3946" stroke-width="1.6"/><rect x="2" y="2" width="5" height="6.5" fill="#fff" stroke="#2f3946" stroke-width="1"/><path d="M4.5 8.5V19H8" fill="none" stroke="#fff" stroke-width="1.6"/></svg>
<svg class="a" style="left:1816px;top:1053px" width="22" height="24" viewBox="0 0 22 24"><path d="M2 8.5H6L12 3V21L6 15.5H2Z" fill="#f2f5f9" stroke="#3b4656" stroke-width="1.1"/><path d="M15.5 8.5Q18 12 15.5 15.5" fill="none" stroke="#dfe6ee" stroke-width="1.2"/></svg>
<div style="left:1851px;top:1056px;width:50px;height:18px;color:#fff;font-size:14.6px;line-height:18px;white-space:pre;text-align:center;width:48px">18:41</div>
<div style="left:1906px;top:1047px;width:14px;height:33px;background:linear-gradient(90deg,#c9d9ea,#9fb4cc 40%,#8fa6c2);border-left:1px solid #6d8199;box-shadow:inset 1px 0 0 rgba(255,255,255,.6)"></div>
</body></html>
